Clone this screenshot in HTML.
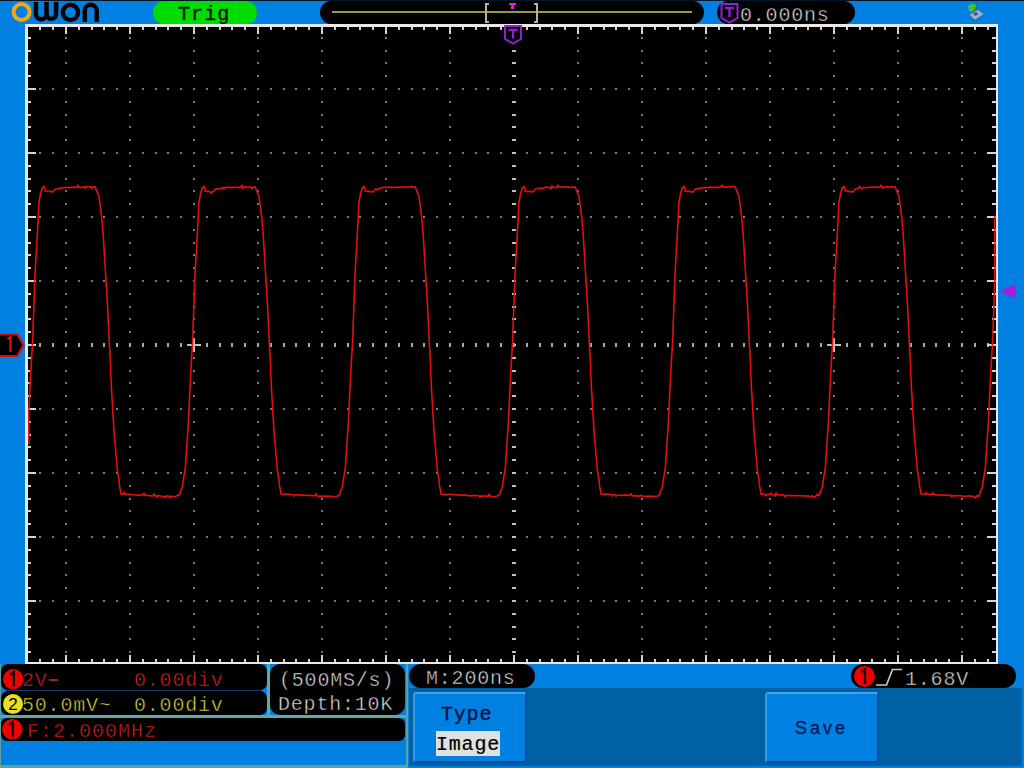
<!DOCTYPE html>
<html><head><meta charset="utf-8">
<style>
html,body{margin:0;padding:0;}
body{width:1024px;height:768px;overflow:hidden;position:relative;background:#0080e0;font-family:"Liberation Mono",monospace;}
.a{position:absolute;}
.t{position:absolute;white-space:pre;font-family:"Liberation Mono",monospace;font-size:20px;line-height:24px;letter-spacing:0.8px;-webkit-text-stroke:0.5px #000;}
.pill{position:absolute;background:#000;border-radius:12px;}
.circ{position:absolute;border-radius:50%;text-align:center;font-family:"Liberation Sans",sans-serif;font-weight:normal;color:#100000;}
</style></head><body>
<!-- top dark line -->
<div class="a" style="left:0;top:0;width:1024px;height:1px;background:#001428"></div>

<!-- OWON logo -->
<svg class="a" style="left:0;top:0" width="110" height="24" viewBox="0 0 110 24">
  <circle cx="21.6" cy="12" r="8" fill="none" stroke="#f0a818" stroke-width="4"/>
  <path d="M35.9,2 V14 a5.3,5.3 0 0 0 10.6,0 V2 M46.5,14 a4.8,4.8 0 0 0 9.6,0 V2" fill="none" stroke="#000" stroke-width="4.5"/>
  <circle cx="70.4" cy="12.4" r="7.6" fill="none" stroke="#000" stroke-width="4.5"/>
  <path d="M84.8,22 V10.8 a5.95,5.95 0 0 1 11.9,0 V22" fill="none" stroke="#000" stroke-width="4.5"/>
</svg>

<!-- Trig pill -->
<div class="a" style="left:153px;top:1px;width:104px;height:23px;border-radius:12px;background:#00dc00"></div>
<div class="t" style="left:178px;top:3px;color:#001800;letter-spacing:1.1px;-webkit-text-stroke:0.4px #001800">Trig</div>

<!-- memory bar pill -->
<div class="pill" style="left:320px;top:1px;width:384px;height:23px"></div>
<div class="a" style="left:332px;top:11px;width:360px;height:2px;background:#98983c"></div>
<!-- brackets -->
<div class="a" style="left:485px;top:3px;width:2px;height:20px;background:#b0b0b0"></div>
<div class="a" style="left:485px;top:3px;width:4px;height:2px;background:#b0b0b0"></div>
<div class="a" style="left:485px;top:21px;width:4px;height:2px;background:#b0b0b0"></div>
<div class="a" style="left:536px;top:3px;width:2px;height:20px;background:#b0b0b0"></div>
<div class="a" style="left:534px;top:3px;width:4px;height:2px;background:#b0b0b0"></div>
<div class="a" style="left:534px;top:21px;width:4px;height:2px;background:#b0b0b0"></div>
<!-- small magenta T -->
<div class="a" style="left:509px;top:3px;width:7px;height:2px;background:#e020e0"></div>
<div class="a" style="left:511px;top:3px;width:3px;height:6px;background:#e020e0"></div>

<!-- time offset pill -->
<div class="pill" style="left:717px;top:1px;width:138px;height:23px"></div>
<svg class="a" style="left:719px;top:2px" width="22" height="22" viewBox="0 0 22 22">
  <path d="M2.5,2 H18.5 V16 L10.5,20.5 L2.5,16 Z" fill="none" stroke="#9020d0" stroke-width="2"/>
  <path d="M6,6 H15 M10.5,6 V15" fill="none" stroke="#9020d0" stroke-width="2.4"/>
</svg>
<div class="t" style="left:740px;top:4px;color:#e0e0e0">0.000ns</div>

<!-- USB icon -->
<svg class="a" style="left:960px;top:0" width="30" height="24" viewBox="0 0 30 24">
  <path d="M9.5,15 L15,19.8 L23.5,14 L18,10 Z" fill="#a8b0b8"/>
  <path d="M13,14 L15.5,16 L18.5,14 L16,12 Z" fill="#504898"/>
  <path d="M8,6 L12,3.5 L16.5,5 L15.5,9.5 L12,12 L9,11 Z" fill="#48c030"/>
  <path d="M12,12 L15.5,9.5 L16.5,5" fill="none" stroke="#208020" stroke-width="1"/>
</svg>

<!-- grid -->
<div class="a" style="left:25px;top:24px;width:973px;height:640px;background:#e8e8e8"></div>
<div class="a" style="left:28px;top:27px;width:968px;height:635px;background:#000"></div>
<svg class="a" style="left:0;top:0" width="1024" height="768"><rect x="65" y="37" width="2" height="2" fill="#787878"/><rect x="65" y="50" width="2" height="2" fill="#787878"/><rect x="65" y="62" width="2" height="2" fill="#787878"/><rect x="65" y="75" width="2" height="2" fill="#787878"/><rect x="65" y="88" width="2" height="2" fill="#787878"/><rect x="65" y="101" width="2" height="2" fill="#787878"/><rect x="65" y="114" width="2" height="2" fill="#787878"/><rect x="65" y="126" width="2" height="2" fill="#787878"/><rect x="65" y="139" width="2" height="2" fill="#787878"/><rect x="65" y="152" width="2" height="2" fill="#787878"/><rect x="65" y="165" width="2" height="2" fill="#787878"/><rect x="65" y="178" width="2" height="2" fill="#787878"/><rect x="65" y="190" width="2" height="2" fill="#787878"/><rect x="65" y="203" width="2" height="2" fill="#787878"/><rect x="65" y="216" width="2" height="2" fill="#787878"/><rect x="65" y="229" width="2" height="2" fill="#787878"/><rect x="65" y="242" width="2" height="2" fill="#787878"/><rect x="65" y="254" width="2" height="2" fill="#787878"/><rect x="65" y="267" width="2" height="2" fill="#787878"/><rect x="65" y="280" width="2" height="2" fill="#787878"/><rect x="65" y="293" width="2" height="2" fill="#787878"/><rect x="65" y="306" width="2" height="2" fill="#787878"/><rect x="65" y="318" width="2" height="2" fill="#787878"/><rect x="65" y="331" width="2" height="2" fill="#787878"/><rect x="65" y="344" width="2" height="2" fill="#787878"/><rect x="65" y="357" width="2" height="2" fill="#787878"/><rect x="65" y="370" width="2" height="2" fill="#787878"/><rect x="65" y="382" width="2" height="2" fill="#787878"/><rect x="65" y="395" width="2" height="2" fill="#787878"/><rect x="65" y="408" width="2" height="2" fill="#787878"/><rect x="65" y="421" width="2" height="2" fill="#787878"/><rect x="65" y="434" width="2" height="2" fill="#787878"/><rect x="65" y="446" width="2" height="2" fill="#787878"/><rect x="65" y="459" width="2" height="2" fill="#787878"/><rect x="65" y="472" width="2" height="2" fill="#787878"/><rect x="65" y="485" width="2" height="2" fill="#787878"/><rect x="65" y="498" width="2" height="2" fill="#787878"/><rect x="65" y="510" width="2" height="2" fill="#787878"/><rect x="65" y="523" width="2" height="2" fill="#787878"/><rect x="65" y="536" width="2" height="2" fill="#787878"/><rect x="65" y="549" width="2" height="2" fill="#787878"/><rect x="65" y="562" width="2" height="2" fill="#787878"/><rect x="65" y="574" width="2" height="2" fill="#787878"/><rect x="65" y="587" width="2" height="2" fill="#787878"/><rect x="65" y="600" width="2" height="2" fill="#787878"/><rect x="65" y="613" width="2" height="2" fill="#787878"/><rect x="65" y="626" width="2" height="2" fill="#787878"/><rect x="65" y="638" width="2" height="2" fill="#787878"/><rect x="65" y="651" width="2" height="2" fill="#787878"/><rect x="129" y="37" width="2" height="2" fill="#787878"/><rect x="129" y="50" width="2" height="2" fill="#787878"/><rect x="129" y="62" width="2" height="2" fill="#787878"/><rect x="129" y="75" width="2" height="2" fill="#787878"/><rect x="129" y="88" width="2" height="2" fill="#787878"/><rect x="129" y="101" width="2" height="2" fill="#787878"/><rect x="129" y="114" width="2" height="2" fill="#787878"/><rect x="129" y="126" width="2" height="2" fill="#787878"/><rect x="129" y="139" width="2" height="2" fill="#787878"/><rect x="129" y="152" width="2" height="2" fill="#787878"/><rect x="129" y="165" width="2" height="2" fill="#787878"/><rect x="129" y="178" width="2" height="2" fill="#787878"/><rect x="129" y="190" width="2" height="2" fill="#787878"/><rect x="129" y="203" width="2" height="2" fill="#787878"/><rect x="129" y="216" width="2" height="2" fill="#787878"/><rect x="129" y="229" width="2" height="2" fill="#787878"/><rect x="129" y="242" width="2" height="2" fill="#787878"/><rect x="129" y="254" width="2" height="2" fill="#787878"/><rect x="129" y="267" width="2" height="2" fill="#787878"/><rect x="129" y="280" width="2" height="2" fill="#787878"/><rect x="129" y="293" width="2" height="2" fill="#787878"/><rect x="129" y="306" width="2" height="2" fill="#787878"/><rect x="129" y="318" width="2" height="2" fill="#787878"/><rect x="129" y="331" width="2" height="2" fill="#787878"/><rect x="129" y="344" width="2" height="2" fill="#787878"/><rect x="129" y="357" width="2" height="2" fill="#787878"/><rect x="129" y="370" width="2" height="2" fill="#787878"/><rect x="129" y="382" width="2" height="2" fill="#787878"/><rect x="129" y="395" width="2" height="2" fill="#787878"/><rect x="129" y="408" width="2" height="2" fill="#787878"/><rect x="129" y="421" width="2" height="2" fill="#787878"/><rect x="129" y="434" width="2" height="2" fill="#787878"/><rect x="129" y="446" width="2" height="2" fill="#787878"/><rect x="129" y="459" width="2" height="2" fill="#787878"/><rect x="129" y="472" width="2" height="2" fill="#787878"/><rect x="129" y="485" width="2" height="2" fill="#787878"/><rect x="129" y="498" width="2" height="2" fill="#787878"/><rect x="129" y="510" width="2" height="2" fill="#787878"/><rect x="129" y="523" width="2" height="2" fill="#787878"/><rect x="129" y="536" width="2" height="2" fill="#787878"/><rect x="129" y="549" width="2" height="2" fill="#787878"/><rect x="129" y="562" width="2" height="2" fill="#787878"/><rect x="129" y="574" width="2" height="2" fill="#787878"/><rect x="129" y="587" width="2" height="2" fill="#787878"/><rect x="129" y="600" width="2" height="2" fill="#787878"/><rect x="129" y="613" width="2" height="2" fill="#787878"/><rect x="129" y="626" width="2" height="2" fill="#787878"/><rect x="129" y="638" width="2" height="2" fill="#787878"/><rect x="129" y="651" width="2" height="2" fill="#787878"/><rect x="193" y="37" width="2" height="2" fill="#787878"/><rect x="193" y="50" width="2" height="2" fill="#787878"/><rect x="193" y="62" width="2" height="2" fill="#787878"/><rect x="193" y="75" width="2" height="2" fill="#787878"/><rect x="193" y="88" width="2" height="2" fill="#787878"/><rect x="193" y="101" width="2" height="2" fill="#787878"/><rect x="193" y="114" width="2" height="2" fill="#787878"/><rect x="193" y="126" width="2" height="2" fill="#787878"/><rect x="193" y="139" width="2" height="2" fill="#787878"/><rect x="193" y="152" width="2" height="2" fill="#787878"/><rect x="193" y="165" width="2" height="2" fill="#787878"/><rect x="193" y="178" width="2" height="2" fill="#787878"/><rect x="193" y="190" width="2" height="2" fill="#787878"/><rect x="193" y="203" width="2" height="2" fill="#787878"/><rect x="193" y="216" width="2" height="2" fill="#787878"/><rect x="193" y="229" width="2" height="2" fill="#787878"/><rect x="193" y="242" width="2" height="2" fill="#787878"/><rect x="193" y="254" width="2" height="2" fill="#787878"/><rect x="193" y="267" width="2" height="2" fill="#787878"/><rect x="193" y="280" width="2" height="2" fill="#787878"/><rect x="193" y="293" width="2" height="2" fill="#787878"/><rect x="193" y="306" width="2" height="2" fill="#787878"/><rect x="193" y="318" width="2" height="2" fill="#787878"/><rect x="193" y="331" width="2" height="2" fill="#787878"/><rect x="193" y="344" width="2" height="2" fill="#787878"/><rect x="193" y="357" width="2" height="2" fill="#787878"/><rect x="193" y="370" width="2" height="2" fill="#787878"/><rect x="193" y="382" width="2" height="2" fill="#787878"/><rect x="193" y="395" width="2" height="2" fill="#787878"/><rect x="193" y="408" width="2" height="2" fill="#787878"/><rect x="193" y="421" width="2" height="2" fill="#787878"/><rect x="193" y="434" width="2" height="2" fill="#787878"/><rect x="193" y="446" width="2" height="2" fill="#787878"/><rect x="193" y="459" width="2" height="2" fill="#787878"/><rect x="193" y="472" width="2" height="2" fill="#787878"/><rect x="193" y="485" width="2" height="2" fill="#787878"/><rect x="193" y="498" width="2" height="2" fill="#787878"/><rect x="193" y="510" width="2" height="2" fill="#787878"/><rect x="193" y="523" width="2" height="2" fill="#787878"/><rect x="193" y="536" width="2" height="2" fill="#787878"/><rect x="193" y="549" width="2" height="2" fill="#787878"/><rect x="193" y="562" width="2" height="2" fill="#787878"/><rect x="193" y="574" width="2" height="2" fill="#787878"/><rect x="193" y="587" width="2" height="2" fill="#787878"/><rect x="193" y="600" width="2" height="2" fill="#787878"/><rect x="193" y="613" width="2" height="2" fill="#787878"/><rect x="193" y="626" width="2" height="2" fill="#787878"/><rect x="193" y="638" width="2" height="2" fill="#787878"/><rect x="193" y="651" width="2" height="2" fill="#787878"/><rect x="257" y="37" width="2" height="2" fill="#787878"/><rect x="257" y="50" width="2" height="2" fill="#787878"/><rect x="257" y="62" width="2" height="2" fill="#787878"/><rect x="257" y="75" width="2" height="2" fill="#787878"/><rect x="257" y="88" width="2" height="2" fill="#787878"/><rect x="257" y="101" width="2" height="2" fill="#787878"/><rect x="257" y="114" width="2" height="2" fill="#787878"/><rect x="257" y="126" width="2" height="2" fill="#787878"/><rect x="257" y="139" width="2" height="2" fill="#787878"/><rect x="257" y="152" width="2" height="2" fill="#787878"/><rect x="257" y="165" width="2" height="2" fill="#787878"/><rect x="257" y="178" width="2" height="2" fill="#787878"/><rect x="257" y="190" width="2" height="2" fill="#787878"/><rect x="257" y="203" width="2" height="2" fill="#787878"/><rect x="257" y="216" width="2" height="2" fill="#787878"/><rect x="257" y="229" width="2" height="2" fill="#787878"/><rect x="257" y="242" width="2" height="2" fill="#787878"/><rect x="257" y="254" width="2" height="2" fill="#787878"/><rect x="257" y="267" width="2" height="2" fill="#787878"/><rect x="257" y="280" width="2" height="2" fill="#787878"/><rect x="257" y="293" width="2" height="2" fill="#787878"/><rect x="257" y="306" width="2" height="2" fill="#787878"/><rect x="257" y="318" width="2" height="2" fill="#787878"/><rect x="257" y="331" width="2" height="2" fill="#787878"/><rect x="257" y="344" width="2" height="2" fill="#787878"/><rect x="257" y="357" width="2" height="2" fill="#787878"/><rect x="257" y="370" width="2" height="2" fill="#787878"/><rect x="257" y="382" width="2" height="2" fill="#787878"/><rect x="257" y="395" width="2" height="2" fill="#787878"/><rect x="257" y="408" width="2" height="2" fill="#787878"/><rect x="257" y="421" width="2" height="2" fill="#787878"/><rect x="257" y="434" width="2" height="2" fill="#787878"/><rect x="257" y="446" width="2" height="2" fill="#787878"/><rect x="257" y="459" width="2" height="2" fill="#787878"/><rect x="257" y="472" width="2" height="2" fill="#787878"/><rect x="257" y="485" width="2" height="2" fill="#787878"/><rect x="257" y="498" width="2" height="2" fill="#787878"/><rect x="257" y="510" width="2" height="2" fill="#787878"/><rect x="257" y="523" width="2" height="2" fill="#787878"/><rect x="257" y="536" width="2" height="2" fill="#787878"/><rect x="257" y="549" width="2" height="2" fill="#787878"/><rect x="257" y="562" width="2" height="2" fill="#787878"/><rect x="257" y="574" width="2" height="2" fill="#787878"/><rect x="257" y="587" width="2" height="2" fill="#787878"/><rect x="257" y="600" width="2" height="2" fill="#787878"/><rect x="257" y="613" width="2" height="2" fill="#787878"/><rect x="257" y="626" width="2" height="2" fill="#787878"/><rect x="257" y="638" width="2" height="2" fill="#787878"/><rect x="257" y="651" width="2" height="2" fill="#787878"/><rect x="321" y="37" width="2" height="2" fill="#787878"/><rect x="321" y="50" width="2" height="2" fill="#787878"/><rect x="321" y="62" width="2" height="2" fill="#787878"/><rect x="321" y="75" width="2" height="2" fill="#787878"/><rect x="321" y="88" width="2" height="2" fill="#787878"/><rect x="321" y="101" width="2" height="2" fill="#787878"/><rect x="321" y="114" width="2" height="2" fill="#787878"/><rect x="321" y="126" width="2" height="2" fill="#787878"/><rect x="321" y="139" width="2" height="2" fill="#787878"/><rect x="321" y="152" width="2" height="2" fill="#787878"/><rect x="321" y="165" width="2" height="2" fill="#787878"/><rect x="321" y="178" width="2" height="2" fill="#787878"/><rect x="321" y="190" width="2" height="2" fill="#787878"/><rect x="321" y="203" width="2" height="2" fill="#787878"/><rect x="321" y="216" width="2" height="2" fill="#787878"/><rect x="321" y="229" width="2" height="2" fill="#787878"/><rect x="321" y="242" width="2" height="2" fill="#787878"/><rect x="321" y="254" width="2" height="2" fill="#787878"/><rect x="321" y="267" width="2" height="2" fill="#787878"/><rect x="321" y="280" width="2" height="2" fill="#787878"/><rect x="321" y="293" width="2" height="2" fill="#787878"/><rect x="321" y="306" width="2" height="2" fill="#787878"/><rect x="321" y="318" width="2" height="2" fill="#787878"/><rect x="321" y="331" width="2" height="2" fill="#787878"/><rect x="321" y="344" width="2" height="2" fill="#787878"/><rect x="321" y="357" width="2" height="2" fill="#787878"/><rect x="321" y="370" width="2" height="2" fill="#787878"/><rect x="321" y="382" width="2" height="2" fill="#787878"/><rect x="321" y="395" width="2" height="2" fill="#787878"/><rect x="321" y="408" width="2" height="2" fill="#787878"/><rect x="321" y="421" width="2" height="2" fill="#787878"/><rect x="321" y="434" width="2" height="2" fill="#787878"/><rect x="321" y="446" width="2" height="2" fill="#787878"/><rect x="321" y="459" width="2" height="2" fill="#787878"/><rect x="321" y="472" width="2" height="2" fill="#787878"/><rect x="321" y="485" width="2" height="2" fill="#787878"/><rect x="321" y="498" width="2" height="2" fill="#787878"/><rect x="321" y="510" width="2" height="2" fill="#787878"/><rect x="321" y="523" width="2" height="2" fill="#787878"/><rect x="321" y="536" width="2" height="2" fill="#787878"/><rect x="321" y="549" width="2" height="2" fill="#787878"/><rect x="321" y="562" width="2" height="2" fill="#787878"/><rect x="321" y="574" width="2" height="2" fill="#787878"/><rect x="321" y="587" width="2" height="2" fill="#787878"/><rect x="321" y="600" width="2" height="2" fill="#787878"/><rect x="321" y="613" width="2" height="2" fill="#787878"/><rect x="321" y="626" width="2" height="2" fill="#787878"/><rect x="321" y="638" width="2" height="2" fill="#787878"/><rect x="321" y="651" width="2" height="2" fill="#787878"/><rect x="385" y="37" width="2" height="2" fill="#787878"/><rect x="385" y="50" width="2" height="2" fill="#787878"/><rect x="385" y="62" width="2" height="2" fill="#787878"/><rect x="385" y="75" width="2" height="2" fill="#787878"/><rect x="385" y="88" width="2" height="2" fill="#787878"/><rect x="385" y="101" width="2" height="2" fill="#787878"/><rect x="385" y="114" width="2" height="2" fill="#787878"/><rect x="385" y="126" width="2" height="2" fill="#787878"/><rect x="385" y="139" width="2" height="2" fill="#787878"/><rect x="385" y="152" width="2" height="2" fill="#787878"/><rect x="385" y="165" width="2" height="2" fill="#787878"/><rect x="385" y="178" width="2" height="2" fill="#787878"/><rect x="385" y="190" width="2" height="2" fill="#787878"/><rect x="385" y="203" width="2" height="2" fill="#787878"/><rect x="385" y="216" width="2" height="2" fill="#787878"/><rect x="385" y="229" width="2" height="2" fill="#787878"/><rect x="385" y="242" width="2" height="2" fill="#787878"/><rect x="385" y="254" width="2" height="2" fill="#787878"/><rect x="385" y="267" width="2" height="2" fill="#787878"/><rect x="385" y="280" width="2" height="2" fill="#787878"/><rect x="385" y="293" width="2" height="2" fill="#787878"/><rect x="385" y="306" width="2" height="2" fill="#787878"/><rect x="385" y="318" width="2" height="2" fill="#787878"/><rect x="385" y="331" width="2" height="2" fill="#787878"/><rect x="385" y="344" width="2" height="2" fill="#787878"/><rect x="385" y="357" width="2" height="2" fill="#787878"/><rect x="385" y="370" width="2" height="2" fill="#787878"/><rect x="385" y="382" width="2" height="2" fill="#787878"/><rect x="385" y="395" width="2" height="2" fill="#787878"/><rect x="385" y="408" width="2" height="2" fill="#787878"/><rect x="385" y="421" width="2" height="2" fill="#787878"/><rect x="385" y="434" width="2" height="2" fill="#787878"/><rect x="385" y="446" width="2" height="2" fill="#787878"/><rect x="385" y="459" width="2" height="2" fill="#787878"/><rect x="385" y="472" width="2" height="2" fill="#787878"/><rect x="385" y="485" width="2" height="2" fill="#787878"/><rect x="385" y="498" width="2" height="2" fill="#787878"/><rect x="385" y="510" width="2" height="2" fill="#787878"/><rect x="385" y="523" width="2" height="2" fill="#787878"/><rect x="385" y="536" width="2" height="2" fill="#787878"/><rect x="385" y="549" width="2" height="2" fill="#787878"/><rect x="385" y="562" width="2" height="2" fill="#787878"/><rect x="385" y="574" width="2" height="2" fill="#787878"/><rect x="385" y="587" width="2" height="2" fill="#787878"/><rect x="385" y="600" width="2" height="2" fill="#787878"/><rect x="385" y="613" width="2" height="2" fill="#787878"/><rect x="385" y="626" width="2" height="2" fill="#787878"/><rect x="385" y="638" width="2" height="2" fill="#787878"/><rect x="385" y="651" width="2" height="2" fill="#787878"/><rect x="449" y="37" width="2" height="2" fill="#787878"/><rect x="449" y="50" width="2" height="2" fill="#787878"/><rect x="449" y="62" width="2" height="2" fill="#787878"/><rect x="449" y="75" width="2" height="2" fill="#787878"/><rect x="449" y="88" width="2" height="2" fill="#787878"/><rect x="449" y="101" width="2" height="2" fill="#787878"/><rect x="449" y="114" width="2" height="2" fill="#787878"/><rect x="449" y="126" width="2" height="2" fill="#787878"/><rect x="449" y="139" width="2" height="2" fill="#787878"/><rect x="449" y="152" width="2" height="2" fill="#787878"/><rect x="449" y="165" width="2" height="2" fill="#787878"/><rect x="449" y="178" width="2" height="2" fill="#787878"/><rect x="449" y="190" width="2" height="2" fill="#787878"/><rect x="449" y="203" width="2" height="2" fill="#787878"/><rect x="449" y="216" width="2" height="2" fill="#787878"/><rect x="449" y="229" width="2" height="2" fill="#787878"/><rect x="449" y="242" width="2" height="2" fill="#787878"/><rect x="449" y="254" width="2" height="2" fill="#787878"/><rect x="449" y="267" width="2" height="2" fill="#787878"/><rect x="449" y="280" width="2" height="2" fill="#787878"/><rect x="449" y="293" width="2" height="2" fill="#787878"/><rect x="449" y="306" width="2" height="2" fill="#787878"/><rect x="449" y="318" width="2" height="2" fill="#787878"/><rect x="449" y="331" width="2" height="2" fill="#787878"/><rect x="449" y="344" width="2" height="2" fill="#787878"/><rect x="449" y="357" width="2" height="2" fill="#787878"/><rect x="449" y="370" width="2" height="2" fill="#787878"/><rect x="449" y="382" width="2" height="2" fill="#787878"/><rect x="449" y="395" width="2" height="2" fill="#787878"/><rect x="449" y="408" width="2" height="2" fill="#787878"/><rect x="449" y="421" width="2" height="2" fill="#787878"/><rect x="449" y="434" width="2" height="2" fill="#787878"/><rect x="449" y="446" width="2" height="2" fill="#787878"/><rect x="449" y="459" width="2" height="2" fill="#787878"/><rect x="449" y="472" width="2" height="2" fill="#787878"/><rect x="449" y="485" width="2" height="2" fill="#787878"/><rect x="449" y="498" width="2" height="2" fill="#787878"/><rect x="449" y="510" width="2" height="2" fill="#787878"/><rect x="449" y="523" width="2" height="2" fill="#787878"/><rect x="449" y="536" width="2" height="2" fill="#787878"/><rect x="449" y="549" width="2" height="2" fill="#787878"/><rect x="449" y="562" width="2" height="2" fill="#787878"/><rect x="449" y="574" width="2" height="2" fill="#787878"/><rect x="449" y="587" width="2" height="2" fill="#787878"/><rect x="449" y="600" width="2" height="2" fill="#787878"/><rect x="449" y="613" width="2" height="2" fill="#787878"/><rect x="449" y="626" width="2" height="2" fill="#787878"/><rect x="449" y="638" width="2" height="2" fill="#787878"/><rect x="449" y="651" width="2" height="2" fill="#787878"/><rect x="513" y="37" width="2" height="2" fill="#787878"/><rect x="513" y="50" width="2" height="2" fill="#787878"/><rect x="513" y="62" width="2" height="2" fill="#787878"/><rect x="513" y="75" width="2" height="2" fill="#787878"/><rect x="513" y="88" width="2" height="2" fill="#787878"/><rect x="513" y="101" width="2" height="2" fill="#787878"/><rect x="513" y="114" width="2" height="2" fill="#787878"/><rect x="513" y="126" width="2" height="2" fill="#787878"/><rect x="513" y="139" width="2" height="2" fill="#787878"/><rect x="513" y="152" width="2" height="2" fill="#787878"/><rect x="513" y="165" width="2" height="2" fill="#787878"/><rect x="513" y="178" width="2" height="2" fill="#787878"/><rect x="513" y="190" width="2" height="2" fill="#787878"/><rect x="513" y="203" width="2" height="2" fill="#787878"/><rect x="513" y="216" width="2" height="2" fill="#787878"/><rect x="513" y="229" width="2" height="2" fill="#787878"/><rect x="513" y="242" width="2" height="2" fill="#787878"/><rect x="513" y="254" width="2" height="2" fill="#787878"/><rect x="513" y="267" width="2" height="2" fill="#787878"/><rect x="513" y="280" width="2" height="2" fill="#787878"/><rect x="513" y="293" width="2" height="2" fill="#787878"/><rect x="513" y="306" width="2" height="2" fill="#787878"/><rect x="513" y="318" width="2" height="2" fill="#787878"/><rect x="513" y="331" width="2" height="2" fill="#787878"/><rect x="513" y="344" width="2" height="2" fill="#787878"/><rect x="513" y="357" width="2" height="2" fill="#787878"/><rect x="513" y="370" width="2" height="2" fill="#787878"/><rect x="513" y="382" width="2" height="2" fill="#787878"/><rect x="513" y="395" width="2" height="2" fill="#787878"/><rect x="513" y="408" width="2" height="2" fill="#787878"/><rect x="513" y="421" width="2" height="2" fill="#787878"/><rect x="513" y="434" width="2" height="2" fill="#787878"/><rect x="513" y="446" width="2" height="2" fill="#787878"/><rect x="513" y="459" width="2" height="2" fill="#787878"/><rect x="513" y="472" width="2" height="2" fill="#787878"/><rect x="513" y="485" width="2" height="2" fill="#787878"/><rect x="513" y="498" width="2" height="2" fill="#787878"/><rect x="513" y="510" width="2" height="2" fill="#787878"/><rect x="513" y="523" width="2" height="2" fill="#787878"/><rect x="513" y="536" width="2" height="2" fill="#787878"/><rect x="513" y="549" width="2" height="2" fill="#787878"/><rect x="513" y="562" width="2" height="2" fill="#787878"/><rect x="513" y="574" width="2" height="2" fill="#787878"/><rect x="513" y="587" width="2" height="2" fill="#787878"/><rect x="513" y="600" width="2" height="2" fill="#787878"/><rect x="513" y="613" width="2" height="2" fill="#787878"/><rect x="513" y="626" width="2" height="2" fill="#787878"/><rect x="513" y="638" width="2" height="2" fill="#787878"/><rect x="513" y="651" width="2" height="2" fill="#787878"/><rect x="577" y="37" width="2" height="2" fill="#787878"/><rect x="577" y="50" width="2" height="2" fill="#787878"/><rect x="577" y="62" width="2" height="2" fill="#787878"/><rect x="577" y="75" width="2" height="2" fill="#787878"/><rect x="577" y="88" width="2" height="2" fill="#787878"/><rect x="577" y="101" width="2" height="2" fill="#787878"/><rect x="577" y="114" width="2" height="2" fill="#787878"/><rect x="577" y="126" width="2" height="2" fill="#787878"/><rect x="577" y="139" width="2" height="2" fill="#787878"/><rect x="577" y="152" width="2" height="2" fill="#787878"/><rect x="577" y="165" width="2" height="2" fill="#787878"/><rect x="577" y="178" width="2" height="2" fill="#787878"/><rect x="577" y="190" width="2" height="2" fill="#787878"/><rect x="577" y="203" width="2" height="2" fill="#787878"/><rect x="577" y="216" width="2" height="2" fill="#787878"/><rect x="577" y="229" width="2" height="2" fill="#787878"/><rect x="577" y="242" width="2" height="2" fill="#787878"/><rect x="577" y="254" width="2" height="2" fill="#787878"/><rect x="577" y="267" width="2" height="2" fill="#787878"/><rect x="577" y="280" width="2" height="2" fill="#787878"/><rect x="577" y="293" width="2" height="2" fill="#787878"/><rect x="577" y="306" width="2" height="2" fill="#787878"/><rect x="577" y="318" width="2" height="2" fill="#787878"/><rect x="577" y="331" width="2" height="2" fill="#787878"/><rect x="577" y="344" width="2" height="2" fill="#787878"/><rect x="577" y="357" width="2" height="2" fill="#787878"/><rect x="577" y="370" width="2" height="2" fill="#787878"/><rect x="577" y="382" width="2" height="2" fill="#787878"/><rect x="577" y="395" width="2" height="2" fill="#787878"/><rect x="577" y="408" width="2" height="2" fill="#787878"/><rect x="577" y="421" width="2" height="2" fill="#787878"/><rect x="577" y="434" width="2" height="2" fill="#787878"/><rect x="577" y="446" width="2" height="2" fill="#787878"/><rect x="577" y="459" width="2" height="2" fill="#787878"/><rect x="577" y="472" width="2" height="2" fill="#787878"/><rect x="577" y="485" width="2" height="2" fill="#787878"/><rect x="577" y="498" width="2" height="2" fill="#787878"/><rect x="577" y="510" width="2" height="2" fill="#787878"/><rect x="577" y="523" width="2" height="2" fill="#787878"/><rect x="577" y="536" width="2" height="2" fill="#787878"/><rect x="577" y="549" width="2" height="2" fill="#787878"/><rect x="577" y="562" width="2" height="2" fill="#787878"/><rect x="577" y="574" width="2" height="2" fill="#787878"/><rect x="577" y="587" width="2" height="2" fill="#787878"/><rect x="577" y="600" width="2" height="2" fill="#787878"/><rect x="577" y="613" width="2" height="2" fill="#787878"/><rect x="577" y="626" width="2" height="2" fill="#787878"/><rect x="577" y="638" width="2" height="2" fill="#787878"/><rect x="577" y="651" width="2" height="2" fill="#787878"/><rect x="641" y="37" width="2" height="2" fill="#787878"/><rect x="641" y="50" width="2" height="2" fill="#787878"/><rect x="641" y="62" width="2" height="2" fill="#787878"/><rect x="641" y="75" width="2" height="2" fill="#787878"/><rect x="641" y="88" width="2" height="2" fill="#787878"/><rect x="641" y="101" width="2" height="2" fill="#787878"/><rect x="641" y="114" width="2" height="2" fill="#787878"/><rect x="641" y="126" width="2" height="2" fill="#787878"/><rect x="641" y="139" width="2" height="2" fill="#787878"/><rect x="641" y="152" width="2" height="2" fill="#787878"/><rect x="641" y="165" width="2" height="2" fill="#787878"/><rect x="641" y="178" width="2" height="2" fill="#787878"/><rect x="641" y="190" width="2" height="2" fill="#787878"/><rect x="641" y="203" width="2" height="2" fill="#787878"/><rect x="641" y="216" width="2" height="2" fill="#787878"/><rect x="641" y="229" width="2" height="2" fill="#787878"/><rect x="641" y="242" width="2" height="2" fill="#787878"/><rect x="641" y="254" width="2" height="2" fill="#787878"/><rect x="641" y="267" width="2" height="2" fill="#787878"/><rect x="641" y="280" width="2" height="2" fill="#787878"/><rect x="641" y="293" width="2" height="2" fill="#787878"/><rect x="641" y="306" width="2" height="2" fill="#787878"/><rect x="641" y="318" width="2" height="2" fill="#787878"/><rect x="641" y="331" width="2" height="2" fill="#787878"/><rect x="641" y="344" width="2" height="2" fill="#787878"/><rect x="641" y="357" width="2" height="2" fill="#787878"/><rect x="641" y="370" width="2" height="2" fill="#787878"/><rect x="641" y="382" width="2" height="2" fill="#787878"/><rect x="641" y="395" width="2" height="2" fill="#787878"/><rect x="641" y="408" width="2" height="2" fill="#787878"/><rect x="641" y="421" width="2" height="2" fill="#787878"/><rect x="641" y="434" width="2" height="2" fill="#787878"/><rect x="641" y="446" width="2" height="2" fill="#787878"/><rect x="641" y="459" width="2" height="2" fill="#787878"/><rect x="641" y="472" width="2" height="2" fill="#787878"/><rect x="641" y="485" width="2" height="2" fill="#787878"/><rect x="641" y="498" width="2" height="2" fill="#787878"/><rect x="641" y="510" width="2" height="2" fill="#787878"/><rect x="641" y="523" width="2" height="2" fill="#787878"/><rect x="641" y="536" width="2" height="2" fill="#787878"/><rect x="641" y="549" width="2" height="2" fill="#787878"/><rect x="641" y="562" width="2" height="2" fill="#787878"/><rect x="641" y="574" width="2" height="2" fill="#787878"/><rect x="641" y="587" width="2" height="2" fill="#787878"/><rect x="641" y="600" width="2" height="2" fill="#787878"/><rect x="641" y="613" width="2" height="2" fill="#787878"/><rect x="641" y="626" width="2" height="2" fill="#787878"/><rect x="641" y="638" width="2" height="2" fill="#787878"/><rect x="641" y="651" width="2" height="2" fill="#787878"/><rect x="705" y="37" width="2" height="2" fill="#787878"/><rect x="705" y="50" width="2" height="2" fill="#787878"/><rect x="705" y="62" width="2" height="2" fill="#787878"/><rect x="705" y="75" width="2" height="2" fill="#787878"/><rect x="705" y="88" width="2" height="2" fill="#787878"/><rect x="705" y="101" width="2" height="2" fill="#787878"/><rect x="705" y="114" width="2" height="2" fill="#787878"/><rect x="705" y="126" width="2" height="2" fill="#787878"/><rect x="705" y="139" width="2" height="2" fill="#787878"/><rect x="705" y="152" width="2" height="2" fill="#787878"/><rect x="705" y="165" width="2" height="2" fill="#787878"/><rect x="705" y="178" width="2" height="2" fill="#787878"/><rect x="705" y="190" width="2" height="2" fill="#787878"/><rect x="705" y="203" width="2" height="2" fill="#787878"/><rect x="705" y="216" width="2" height="2" fill="#787878"/><rect x="705" y="229" width="2" height="2" fill="#787878"/><rect x="705" y="242" width="2" height="2" fill="#787878"/><rect x="705" y="254" width="2" height="2" fill="#787878"/><rect x="705" y="267" width="2" height="2" fill="#787878"/><rect x="705" y="280" width="2" height="2" fill="#787878"/><rect x="705" y="293" width="2" height="2" fill="#787878"/><rect x="705" y="306" width="2" height="2" fill="#787878"/><rect x="705" y="318" width="2" height="2" fill="#787878"/><rect x="705" y="331" width="2" height="2" fill="#787878"/><rect x="705" y="344" width="2" height="2" fill="#787878"/><rect x="705" y="357" width="2" height="2" fill="#787878"/><rect x="705" y="370" width="2" height="2" fill="#787878"/><rect x="705" y="382" width="2" height="2" fill="#787878"/><rect x="705" y="395" width="2" height="2" fill="#787878"/><rect x="705" y="408" width="2" height="2" fill="#787878"/><rect x="705" y="421" width="2" height="2" fill="#787878"/><rect x="705" y="434" width="2" height="2" fill="#787878"/><rect x="705" y="446" width="2" height="2" fill="#787878"/><rect x="705" y="459" width="2" height="2" fill="#787878"/><rect x="705" y="472" width="2" height="2" fill="#787878"/><rect x="705" y="485" width="2" height="2" fill="#787878"/><rect x="705" y="498" width="2" height="2" fill="#787878"/><rect x="705" y="510" width="2" height="2" fill="#787878"/><rect x="705" y="523" width="2" height="2" fill="#787878"/><rect x="705" y="536" width="2" height="2" fill="#787878"/><rect x="705" y="549" width="2" height="2" fill="#787878"/><rect x="705" y="562" width="2" height="2" fill="#787878"/><rect x="705" y="574" width="2" height="2" fill="#787878"/><rect x="705" y="587" width="2" height="2" fill="#787878"/><rect x="705" y="600" width="2" height="2" fill="#787878"/><rect x="705" y="613" width="2" height="2" fill="#787878"/><rect x="705" y="626" width="2" height="2" fill="#787878"/><rect x="705" y="638" width="2" height="2" fill="#787878"/><rect x="705" y="651" width="2" height="2" fill="#787878"/><rect x="769" y="37" width="2" height="2" fill="#787878"/><rect x="769" y="50" width="2" height="2" fill="#787878"/><rect x="769" y="62" width="2" height="2" fill="#787878"/><rect x="769" y="75" width="2" height="2" fill="#787878"/><rect x="769" y="88" width="2" height="2" fill="#787878"/><rect x="769" y="101" width="2" height="2" fill="#787878"/><rect x="769" y="114" width="2" height="2" fill="#787878"/><rect x="769" y="126" width="2" height="2" fill="#787878"/><rect x="769" y="139" width="2" height="2" fill="#787878"/><rect x="769" y="152" width="2" height="2" fill="#787878"/><rect x="769" y="165" width="2" height="2" fill="#787878"/><rect x="769" y="178" width="2" height="2" fill="#787878"/><rect x="769" y="190" width="2" height="2" fill="#787878"/><rect x="769" y="203" width="2" height="2" fill="#787878"/><rect x="769" y="216" width="2" height="2" fill="#787878"/><rect x="769" y="229" width="2" height="2" fill="#787878"/><rect x="769" y="242" width="2" height="2" fill="#787878"/><rect x="769" y="254" width="2" height="2" fill="#787878"/><rect x="769" y="267" width="2" height="2" fill="#787878"/><rect x="769" y="280" width="2" height="2" fill="#787878"/><rect x="769" y="293" width="2" height="2" fill="#787878"/><rect x="769" y="306" width="2" height="2" fill="#787878"/><rect x="769" y="318" width="2" height="2" fill="#787878"/><rect x="769" y="331" width="2" height="2" fill="#787878"/><rect x="769" y="344" width="2" height="2" fill="#787878"/><rect x="769" y="357" width="2" height="2" fill="#787878"/><rect x="769" y="370" width="2" height="2" fill="#787878"/><rect x="769" y="382" width="2" height="2" fill="#787878"/><rect x="769" y="395" width="2" height="2" fill="#787878"/><rect x="769" y="408" width="2" height="2" fill="#787878"/><rect x="769" y="421" width="2" height="2" fill="#787878"/><rect x="769" y="434" width="2" height="2" fill="#787878"/><rect x="769" y="446" width="2" height="2" fill="#787878"/><rect x="769" y="459" width="2" height="2" fill="#787878"/><rect x="769" y="472" width="2" height="2" fill="#787878"/><rect x="769" y="485" width="2" height="2" fill="#787878"/><rect x="769" y="498" width="2" height="2" fill="#787878"/><rect x="769" y="510" width="2" height="2" fill="#787878"/><rect x="769" y="523" width="2" height="2" fill="#787878"/><rect x="769" y="536" width="2" height="2" fill="#787878"/><rect x="769" y="549" width="2" height="2" fill="#787878"/><rect x="769" y="562" width="2" height="2" fill="#787878"/><rect x="769" y="574" width="2" height="2" fill="#787878"/><rect x="769" y="587" width="2" height="2" fill="#787878"/><rect x="769" y="600" width="2" height="2" fill="#787878"/><rect x="769" y="613" width="2" height="2" fill="#787878"/><rect x="769" y="626" width="2" height="2" fill="#787878"/><rect x="769" y="638" width="2" height="2" fill="#787878"/><rect x="769" y="651" width="2" height="2" fill="#787878"/><rect x="833" y="37" width="2" height="2" fill="#787878"/><rect x="833" y="50" width="2" height="2" fill="#787878"/><rect x="833" y="62" width="2" height="2" fill="#787878"/><rect x="833" y="75" width="2" height="2" fill="#787878"/><rect x="833" y="88" width="2" height="2" fill="#787878"/><rect x="833" y="101" width="2" height="2" fill="#787878"/><rect x="833" y="114" width="2" height="2" fill="#787878"/><rect x="833" y="126" width="2" height="2" fill="#787878"/><rect x="833" y="139" width="2" height="2" fill="#787878"/><rect x="833" y="152" width="2" height="2" fill="#787878"/><rect x="833" y="165" width="2" height="2" fill="#787878"/><rect x="833" y="178" width="2" height="2" fill="#787878"/><rect x="833" y="190" width="2" height="2" fill="#787878"/><rect x="833" y="203" width="2" height="2" fill="#787878"/><rect x="833" y="216" width="2" height="2" fill="#787878"/><rect x="833" y="229" width="2" height="2" fill="#787878"/><rect x="833" y="242" width="2" height="2" fill="#787878"/><rect x="833" y="254" width="2" height="2" fill="#787878"/><rect x="833" y="267" width="2" height="2" fill="#787878"/><rect x="833" y="280" width="2" height="2" fill="#787878"/><rect x="833" y="293" width="2" height="2" fill="#787878"/><rect x="833" y="306" width="2" height="2" fill="#787878"/><rect x="833" y="318" width="2" height="2" fill="#787878"/><rect x="833" y="331" width="2" height="2" fill="#787878"/><rect x="833" y="344" width="2" height="2" fill="#787878"/><rect x="833" y="357" width="2" height="2" fill="#787878"/><rect x="833" y="370" width="2" height="2" fill="#787878"/><rect x="833" y="382" width="2" height="2" fill="#787878"/><rect x="833" y="395" width="2" height="2" fill="#787878"/><rect x="833" y="408" width="2" height="2" fill="#787878"/><rect x="833" y="421" width="2" height="2" fill="#787878"/><rect x="833" y="434" width="2" height="2" fill="#787878"/><rect x="833" y="446" width="2" height="2" fill="#787878"/><rect x="833" y="459" width="2" height="2" fill="#787878"/><rect x="833" y="472" width="2" height="2" fill="#787878"/><rect x="833" y="485" width="2" height="2" fill="#787878"/><rect x="833" y="498" width="2" height="2" fill="#787878"/><rect x="833" y="510" width="2" height="2" fill="#787878"/><rect x="833" y="523" width="2" height="2" fill="#787878"/><rect x="833" y="536" width="2" height="2" fill="#787878"/><rect x="833" y="549" width="2" height="2" fill="#787878"/><rect x="833" y="562" width="2" height="2" fill="#787878"/><rect x="833" y="574" width="2" height="2" fill="#787878"/><rect x="833" y="587" width="2" height="2" fill="#787878"/><rect x="833" y="600" width="2" height="2" fill="#787878"/><rect x="833" y="613" width="2" height="2" fill="#787878"/><rect x="833" y="626" width="2" height="2" fill="#787878"/><rect x="833" y="638" width="2" height="2" fill="#787878"/><rect x="833" y="651" width="2" height="2" fill="#787878"/><rect x="897" y="37" width="2" height="2" fill="#787878"/><rect x="897" y="50" width="2" height="2" fill="#787878"/><rect x="897" y="62" width="2" height="2" fill="#787878"/><rect x="897" y="75" width="2" height="2" fill="#787878"/><rect x="897" y="88" width="2" height="2" fill="#787878"/><rect x="897" y="101" width="2" height="2" fill="#787878"/><rect x="897" y="114" width="2" height="2" fill="#787878"/><rect x="897" y="126" width="2" height="2" fill="#787878"/><rect x="897" y="139" width="2" height="2" fill="#787878"/><rect x="897" y="152" width="2" height="2" fill="#787878"/><rect x="897" y="165" width="2" height="2" fill="#787878"/><rect x="897" y="178" width="2" height="2" fill="#787878"/><rect x="897" y="190" width="2" height="2" fill="#787878"/><rect x="897" y="203" width="2" height="2" fill="#787878"/><rect x="897" y="216" width="2" height="2" fill="#787878"/><rect x="897" y="229" width="2" height="2" fill="#787878"/><rect x="897" y="242" width="2" height="2" fill="#787878"/><rect x="897" y="254" width="2" height="2" fill="#787878"/><rect x="897" y="267" width="2" height="2" fill="#787878"/><rect x="897" y="280" width="2" height="2" fill="#787878"/><rect x="897" y="293" width="2" height="2" fill="#787878"/><rect x="897" y="306" width="2" height="2" fill="#787878"/><rect x="897" y="318" width="2" height="2" fill="#787878"/><rect x="897" y="331" width="2" height="2" fill="#787878"/><rect x="897" y="344" width="2" height="2" fill="#787878"/><rect x="897" y="357" width="2" height="2" fill="#787878"/><rect x="897" y="370" width="2" height="2" fill="#787878"/><rect x="897" y="382" width="2" height="2" fill="#787878"/><rect x="897" y="395" width="2" height="2" fill="#787878"/><rect x="897" y="408" width="2" height="2" fill="#787878"/><rect x="897" y="421" width="2" height="2" fill="#787878"/><rect x="897" y="434" width="2" height="2" fill="#787878"/><rect x="897" y="446" width="2" height="2" fill="#787878"/><rect x="897" y="459" width="2" height="2" fill="#787878"/><rect x="897" y="472" width="2" height="2" fill="#787878"/><rect x="897" y="485" width="2" height="2" fill="#787878"/><rect x="897" y="498" width="2" height="2" fill="#787878"/><rect x="897" y="510" width="2" height="2" fill="#787878"/><rect x="897" y="523" width="2" height="2" fill="#787878"/><rect x="897" y="536" width="2" height="2" fill="#787878"/><rect x="897" y="549" width="2" height="2" fill="#787878"/><rect x="897" y="562" width="2" height="2" fill="#787878"/><rect x="897" y="574" width="2" height="2" fill="#787878"/><rect x="897" y="587" width="2" height="2" fill="#787878"/><rect x="897" y="600" width="2" height="2" fill="#787878"/><rect x="897" y="613" width="2" height="2" fill="#787878"/><rect x="897" y="626" width="2" height="2" fill="#787878"/><rect x="897" y="638" width="2" height="2" fill="#787878"/><rect x="897" y="651" width="2" height="2" fill="#787878"/><rect x="961" y="37" width="2" height="2" fill="#787878"/><rect x="961" y="50" width="2" height="2" fill="#787878"/><rect x="961" y="62" width="2" height="2" fill="#787878"/><rect x="961" y="75" width="2" height="2" fill="#787878"/><rect x="961" y="88" width="2" height="2" fill="#787878"/><rect x="961" y="101" width="2" height="2" fill="#787878"/><rect x="961" y="114" width="2" height="2" fill="#787878"/><rect x="961" y="126" width="2" height="2" fill="#787878"/><rect x="961" y="139" width="2" height="2" fill="#787878"/><rect x="961" y="152" width="2" height="2" fill="#787878"/><rect x="961" y="165" width="2" height="2" fill="#787878"/><rect x="961" y="178" width="2" height="2" fill="#787878"/><rect x="961" y="190" width="2" height="2" fill="#787878"/><rect x="961" y="203" width="2" height="2" fill="#787878"/><rect x="961" y="216" width="2" height="2" fill="#787878"/><rect x="961" y="229" width="2" height="2" fill="#787878"/><rect x="961" y="242" width="2" height="2" fill="#787878"/><rect x="961" y="254" width="2" height="2" fill="#787878"/><rect x="961" y="267" width="2" height="2" fill="#787878"/><rect x="961" y="280" width="2" height="2" fill="#787878"/><rect x="961" y="293" width="2" height="2" fill="#787878"/><rect x="961" y="306" width="2" height="2" fill="#787878"/><rect x="961" y="318" width="2" height="2" fill="#787878"/><rect x="961" y="331" width="2" height="2" fill="#787878"/><rect x="961" y="344" width="2" height="2" fill="#787878"/><rect x="961" y="357" width="2" height="2" fill="#787878"/><rect x="961" y="370" width="2" height="2" fill="#787878"/><rect x="961" y="382" width="2" height="2" fill="#787878"/><rect x="961" y="395" width="2" height="2" fill="#787878"/><rect x="961" y="408" width="2" height="2" fill="#787878"/><rect x="961" y="421" width="2" height="2" fill="#787878"/><rect x="961" y="434" width="2" height="2" fill="#787878"/><rect x="961" y="446" width="2" height="2" fill="#787878"/><rect x="961" y="459" width="2" height="2" fill="#787878"/><rect x="961" y="472" width="2" height="2" fill="#787878"/><rect x="961" y="485" width="2" height="2" fill="#787878"/><rect x="961" y="498" width="2" height="2" fill="#787878"/><rect x="961" y="510" width="2" height="2" fill="#787878"/><rect x="961" y="523" width="2" height="2" fill="#787878"/><rect x="961" y="536" width="2" height="2" fill="#787878"/><rect x="961" y="549" width="2" height="2" fill="#787878"/><rect x="961" y="562" width="2" height="2" fill="#787878"/><rect x="961" y="574" width="2" height="2" fill="#787878"/><rect x="961" y="587" width="2" height="2" fill="#787878"/><rect x="961" y="600" width="2" height="2" fill="#787878"/><rect x="961" y="613" width="2" height="2" fill="#787878"/><rect x="961" y="626" width="2" height="2" fill="#787878"/><rect x="961" y="638" width="2" height="2" fill="#787878"/><rect x="961" y="651" width="2" height="2" fill="#787878"/><rect x="39" y="88" width="2" height="2" fill="#787878"/><rect x="52" y="88" width="2" height="2" fill="#787878"/><rect x="78" y="88" width="2" height="2" fill="#787878"/><rect x="91" y="88" width="2" height="2" fill="#787878"/><rect x="103" y="88" width="2" height="2" fill="#787878"/><rect x="116" y="88" width="2" height="2" fill="#787878"/><rect x="142" y="88" width="2" height="2" fill="#787878"/><rect x="155" y="88" width="2" height="2" fill="#787878"/><rect x="167" y="88" width="2" height="2" fill="#787878"/><rect x="180" y="88" width="2" height="2" fill="#787878"/><rect x="206" y="88" width="2" height="2" fill="#787878"/><rect x="219" y="88" width="2" height="2" fill="#787878"/><rect x="231" y="88" width="2" height="2" fill="#787878"/><rect x="244" y="88" width="2" height="2" fill="#787878"/><rect x="270" y="88" width="2" height="2" fill="#787878"/><rect x="283" y="88" width="2" height="2" fill="#787878"/><rect x="295" y="88" width="2" height="2" fill="#787878"/><rect x="308" y="88" width="2" height="2" fill="#787878"/><rect x="334" y="88" width="2" height="2" fill="#787878"/><rect x="347" y="88" width="2" height="2" fill="#787878"/><rect x="359" y="88" width="2" height="2" fill="#787878"/><rect x="372" y="88" width="2" height="2" fill="#787878"/><rect x="398" y="88" width="2" height="2" fill="#787878"/><rect x="411" y="88" width="2" height="2" fill="#787878"/><rect x="423" y="88" width="2" height="2" fill="#787878"/><rect x="436" y="88" width="2" height="2" fill="#787878"/><rect x="462" y="88" width="2" height="2" fill="#787878"/><rect x="475" y="88" width="2" height="2" fill="#787878"/><rect x="487" y="88" width="2" height="2" fill="#787878"/><rect x="500" y="88" width="2" height="2" fill="#787878"/><rect x="526" y="88" width="2" height="2" fill="#787878"/><rect x="539" y="88" width="2" height="2" fill="#787878"/><rect x="551" y="88" width="2" height="2" fill="#787878"/><rect x="564" y="88" width="2" height="2" fill="#787878"/><rect x="590" y="88" width="2" height="2" fill="#787878"/><rect x="603" y="88" width="2" height="2" fill="#787878"/><rect x="615" y="88" width="2" height="2" fill="#787878"/><rect x="628" y="88" width="2" height="2" fill="#787878"/><rect x="654" y="88" width="2" height="2" fill="#787878"/><rect x="667" y="88" width="2" height="2" fill="#787878"/><rect x="679" y="88" width="2" height="2" fill="#787878"/><rect x="692" y="88" width="2" height="2" fill="#787878"/><rect x="718" y="88" width="2" height="2" fill="#787878"/><rect x="731" y="88" width="2" height="2" fill="#787878"/><rect x="743" y="88" width="2" height="2" fill="#787878"/><rect x="756" y="88" width="2" height="2" fill="#787878"/><rect x="782" y="88" width="2" height="2" fill="#787878"/><rect x="795" y="88" width="2" height="2" fill="#787878"/><rect x="807" y="88" width="2" height="2" fill="#787878"/><rect x="820" y="88" width="2" height="2" fill="#787878"/><rect x="846" y="88" width="2" height="2" fill="#787878"/><rect x="859" y="88" width="2" height="2" fill="#787878"/><rect x="871" y="88" width="2" height="2" fill="#787878"/><rect x="884" y="88" width="2" height="2" fill="#787878"/><rect x="910" y="88" width="2" height="2" fill="#787878"/><rect x="923" y="88" width="2" height="2" fill="#787878"/><rect x="935" y="88" width="2" height="2" fill="#787878"/><rect x="948" y="88" width="2" height="2" fill="#787878"/><rect x="974" y="88" width="2" height="2" fill="#787878"/><rect x="987" y="88" width="2" height="2" fill="#787878"/><rect x="39" y="152" width="2" height="2" fill="#787878"/><rect x="52" y="152" width="2" height="2" fill="#787878"/><rect x="78" y="152" width="2" height="2" fill="#787878"/><rect x="91" y="152" width="2" height="2" fill="#787878"/><rect x="103" y="152" width="2" height="2" fill="#787878"/><rect x="116" y="152" width="2" height="2" fill="#787878"/><rect x="142" y="152" width="2" height="2" fill="#787878"/><rect x="155" y="152" width="2" height="2" fill="#787878"/><rect x="167" y="152" width="2" height="2" fill="#787878"/><rect x="180" y="152" width="2" height="2" fill="#787878"/><rect x="206" y="152" width="2" height="2" fill="#787878"/><rect x="219" y="152" width="2" height="2" fill="#787878"/><rect x="231" y="152" width="2" height="2" fill="#787878"/><rect x="244" y="152" width="2" height="2" fill="#787878"/><rect x="270" y="152" width="2" height="2" fill="#787878"/><rect x="283" y="152" width="2" height="2" fill="#787878"/><rect x="295" y="152" width="2" height="2" fill="#787878"/><rect x="308" y="152" width="2" height="2" fill="#787878"/><rect x="334" y="152" width="2" height="2" fill="#787878"/><rect x="347" y="152" width="2" height="2" fill="#787878"/><rect x="359" y="152" width="2" height="2" fill="#787878"/><rect x="372" y="152" width="2" height="2" fill="#787878"/><rect x="398" y="152" width="2" height="2" fill="#787878"/><rect x="411" y="152" width="2" height="2" fill="#787878"/><rect x="423" y="152" width="2" height="2" fill="#787878"/><rect x="436" y="152" width="2" height="2" fill="#787878"/><rect x="462" y="152" width="2" height="2" fill="#787878"/><rect x="475" y="152" width="2" height="2" fill="#787878"/><rect x="487" y="152" width="2" height="2" fill="#787878"/><rect x="500" y="152" width="2" height="2" fill="#787878"/><rect x="526" y="152" width="2" height="2" fill="#787878"/><rect x="539" y="152" width="2" height="2" fill="#787878"/><rect x="551" y="152" width="2" height="2" fill="#787878"/><rect x="564" y="152" width="2" height="2" fill="#787878"/><rect x="590" y="152" width="2" height="2" fill="#787878"/><rect x="603" y="152" width="2" height="2" fill="#787878"/><rect x="615" y="152" width="2" height="2" fill="#787878"/><rect x="628" y="152" width="2" height="2" fill="#787878"/><rect x="654" y="152" width="2" height="2" fill="#787878"/><rect x="667" y="152" width="2" height="2" fill="#787878"/><rect x="679" y="152" width="2" height="2" fill="#787878"/><rect x="692" y="152" width="2" height="2" fill="#787878"/><rect x="718" y="152" width="2" height="2" fill="#787878"/><rect x="731" y="152" width="2" height="2" fill="#787878"/><rect x="743" y="152" width="2" height="2" fill="#787878"/><rect x="756" y="152" width="2" height="2" fill="#787878"/><rect x="782" y="152" width="2" height="2" fill="#787878"/><rect x="795" y="152" width="2" height="2" fill="#787878"/><rect x="807" y="152" width="2" height="2" fill="#787878"/><rect x="820" y="152" width="2" height="2" fill="#787878"/><rect x="846" y="152" width="2" height="2" fill="#787878"/><rect x="859" y="152" width="2" height="2" fill="#787878"/><rect x="871" y="152" width="2" height="2" fill="#787878"/><rect x="884" y="152" width="2" height="2" fill="#787878"/><rect x="910" y="152" width="2" height="2" fill="#787878"/><rect x="923" y="152" width="2" height="2" fill="#787878"/><rect x="935" y="152" width="2" height="2" fill="#787878"/><rect x="948" y="152" width="2" height="2" fill="#787878"/><rect x="974" y="152" width="2" height="2" fill="#787878"/><rect x="987" y="152" width="2" height="2" fill="#787878"/><rect x="39" y="216" width="2" height="2" fill="#787878"/><rect x="52" y="216" width="2" height="2" fill="#787878"/><rect x="78" y="216" width="2" height="2" fill="#787878"/><rect x="91" y="216" width="2" height="2" fill="#787878"/><rect x="103" y="216" width="2" height="2" fill="#787878"/><rect x="116" y="216" width="2" height="2" fill="#787878"/><rect x="142" y="216" width="2" height="2" fill="#787878"/><rect x="155" y="216" width="2" height="2" fill="#787878"/><rect x="167" y="216" width="2" height="2" fill="#787878"/><rect x="180" y="216" width="2" height="2" fill="#787878"/><rect x="206" y="216" width="2" height="2" fill="#787878"/><rect x="219" y="216" width="2" height="2" fill="#787878"/><rect x="231" y="216" width="2" height="2" fill="#787878"/><rect x="244" y="216" width="2" height="2" fill="#787878"/><rect x="270" y="216" width="2" height="2" fill="#787878"/><rect x="283" y="216" width="2" height="2" fill="#787878"/><rect x="295" y="216" width="2" height="2" fill="#787878"/><rect x="308" y="216" width="2" height="2" fill="#787878"/><rect x="334" y="216" width="2" height="2" fill="#787878"/><rect x="347" y="216" width="2" height="2" fill="#787878"/><rect x="359" y="216" width="2" height="2" fill="#787878"/><rect x="372" y="216" width="2" height="2" fill="#787878"/><rect x="398" y="216" width="2" height="2" fill="#787878"/><rect x="411" y="216" width="2" height="2" fill="#787878"/><rect x="423" y="216" width="2" height="2" fill="#787878"/><rect x="436" y="216" width="2" height="2" fill="#787878"/><rect x="462" y="216" width="2" height="2" fill="#787878"/><rect x="475" y="216" width="2" height="2" fill="#787878"/><rect x="487" y="216" width="2" height="2" fill="#787878"/><rect x="500" y="216" width="2" height="2" fill="#787878"/><rect x="526" y="216" width="2" height="2" fill="#787878"/><rect x="539" y="216" width="2" height="2" fill="#787878"/><rect x="551" y="216" width="2" height="2" fill="#787878"/><rect x="564" y="216" width="2" height="2" fill="#787878"/><rect x="590" y="216" width="2" height="2" fill="#787878"/><rect x="603" y="216" width="2" height="2" fill="#787878"/><rect x="615" y="216" width="2" height="2" fill="#787878"/><rect x="628" y="216" width="2" height="2" fill="#787878"/><rect x="654" y="216" width="2" height="2" fill="#787878"/><rect x="667" y="216" width="2" height="2" fill="#787878"/><rect x="679" y="216" width="2" height="2" fill="#787878"/><rect x="692" y="216" width="2" height="2" fill="#787878"/><rect x="718" y="216" width="2" height="2" fill="#787878"/><rect x="731" y="216" width="2" height="2" fill="#787878"/><rect x="743" y="216" width="2" height="2" fill="#787878"/><rect x="756" y="216" width="2" height="2" fill="#787878"/><rect x="782" y="216" width="2" height="2" fill="#787878"/><rect x="795" y="216" width="2" height="2" fill="#787878"/><rect x="807" y="216" width="2" height="2" fill="#787878"/><rect x="820" y="216" width="2" height="2" fill="#787878"/><rect x="846" y="216" width="2" height="2" fill="#787878"/><rect x="859" y="216" width="2" height="2" fill="#787878"/><rect x="871" y="216" width="2" height="2" fill="#787878"/><rect x="884" y="216" width="2" height="2" fill="#787878"/><rect x="910" y="216" width="2" height="2" fill="#787878"/><rect x="923" y="216" width="2" height="2" fill="#787878"/><rect x="935" y="216" width="2" height="2" fill="#787878"/><rect x="948" y="216" width="2" height="2" fill="#787878"/><rect x="974" y="216" width="2" height="2" fill="#787878"/><rect x="987" y="216" width="2" height="2" fill="#787878"/><rect x="39" y="280" width="2" height="2" fill="#787878"/><rect x="52" y="280" width="2" height="2" fill="#787878"/><rect x="78" y="280" width="2" height="2" fill="#787878"/><rect x="91" y="280" width="2" height="2" fill="#787878"/><rect x="103" y="280" width="2" height="2" fill="#787878"/><rect x="116" y="280" width="2" height="2" fill="#787878"/><rect x="142" y="280" width="2" height="2" fill="#787878"/><rect x="155" y="280" width="2" height="2" fill="#787878"/><rect x="167" y="280" width="2" height="2" fill="#787878"/><rect x="180" y="280" width="2" height="2" fill="#787878"/><rect x="206" y="280" width="2" height="2" fill="#787878"/><rect x="219" y="280" width="2" height="2" fill="#787878"/><rect x="231" y="280" width="2" height="2" fill="#787878"/><rect x="244" y="280" width="2" height="2" fill="#787878"/><rect x="270" y="280" width="2" height="2" fill="#787878"/><rect x="283" y="280" width="2" height="2" fill="#787878"/><rect x="295" y="280" width="2" height="2" fill="#787878"/><rect x="308" y="280" width="2" height="2" fill="#787878"/><rect x="334" y="280" width="2" height="2" fill="#787878"/><rect x="347" y="280" width="2" height="2" fill="#787878"/><rect x="359" y="280" width="2" height="2" fill="#787878"/><rect x="372" y="280" width="2" height="2" fill="#787878"/><rect x="398" y="280" width="2" height="2" fill="#787878"/><rect x="411" y="280" width="2" height="2" fill="#787878"/><rect x="423" y="280" width="2" height="2" fill="#787878"/><rect x="436" y="280" width="2" height="2" fill="#787878"/><rect x="462" y="280" width="2" height="2" fill="#787878"/><rect x="475" y="280" width="2" height="2" fill="#787878"/><rect x="487" y="280" width="2" height="2" fill="#787878"/><rect x="500" y="280" width="2" height="2" fill="#787878"/><rect x="526" y="280" width="2" height="2" fill="#787878"/><rect x="539" y="280" width="2" height="2" fill="#787878"/><rect x="551" y="280" width="2" height="2" fill="#787878"/><rect x="564" y="280" width="2" height="2" fill="#787878"/><rect x="590" y="280" width="2" height="2" fill="#787878"/><rect x="603" y="280" width="2" height="2" fill="#787878"/><rect x="615" y="280" width="2" height="2" fill="#787878"/><rect x="628" y="280" width="2" height="2" fill="#787878"/><rect x="654" y="280" width="2" height="2" fill="#787878"/><rect x="667" y="280" width="2" height="2" fill="#787878"/><rect x="679" y="280" width="2" height="2" fill="#787878"/><rect x="692" y="280" width="2" height="2" fill="#787878"/><rect x="718" y="280" width="2" height="2" fill="#787878"/><rect x="731" y="280" width="2" height="2" fill="#787878"/><rect x="743" y="280" width="2" height="2" fill="#787878"/><rect x="756" y="280" width="2" height="2" fill="#787878"/><rect x="782" y="280" width="2" height="2" fill="#787878"/><rect x="795" y="280" width="2" height="2" fill="#787878"/><rect x="807" y="280" width="2" height="2" fill="#787878"/><rect x="820" y="280" width="2" height="2" fill="#787878"/><rect x="846" y="280" width="2" height="2" fill="#787878"/><rect x="859" y="280" width="2" height="2" fill="#787878"/><rect x="871" y="280" width="2" height="2" fill="#787878"/><rect x="884" y="280" width="2" height="2" fill="#787878"/><rect x="910" y="280" width="2" height="2" fill="#787878"/><rect x="923" y="280" width="2" height="2" fill="#787878"/><rect x="935" y="280" width="2" height="2" fill="#787878"/><rect x="948" y="280" width="2" height="2" fill="#787878"/><rect x="974" y="280" width="2" height="2" fill="#787878"/><rect x="987" y="280" width="2" height="2" fill="#787878"/><rect x="39" y="344" width="2" height="2" fill="#787878"/><rect x="52" y="344" width="2" height="2" fill="#787878"/><rect x="78" y="344" width="2" height="2" fill="#787878"/><rect x="91" y="344" width="2" height="2" fill="#787878"/><rect x="103" y="344" width="2" height="2" fill="#787878"/><rect x="116" y="344" width="2" height="2" fill="#787878"/><rect x="142" y="344" width="2" height="2" fill="#787878"/><rect x="155" y="344" width="2" height="2" fill="#787878"/><rect x="167" y="344" width="2" height="2" fill="#787878"/><rect x="180" y="344" width="2" height="2" fill="#787878"/><rect x="206" y="344" width="2" height="2" fill="#787878"/><rect x="219" y="344" width="2" height="2" fill="#787878"/><rect x="231" y="344" width="2" height="2" fill="#787878"/><rect x="244" y="344" width="2" height="2" fill="#787878"/><rect x="270" y="344" width="2" height="2" fill="#787878"/><rect x="283" y="344" width="2" height="2" fill="#787878"/><rect x="295" y="344" width="2" height="2" fill="#787878"/><rect x="308" y="344" width="2" height="2" fill="#787878"/><rect x="334" y="344" width="2" height="2" fill="#787878"/><rect x="347" y="344" width="2" height="2" fill="#787878"/><rect x="359" y="344" width="2" height="2" fill="#787878"/><rect x="372" y="344" width="2" height="2" fill="#787878"/><rect x="398" y="344" width="2" height="2" fill="#787878"/><rect x="411" y="344" width="2" height="2" fill="#787878"/><rect x="423" y="344" width="2" height="2" fill="#787878"/><rect x="436" y="344" width="2" height="2" fill="#787878"/><rect x="462" y="344" width="2" height="2" fill="#787878"/><rect x="475" y="344" width="2" height="2" fill="#787878"/><rect x="487" y="344" width="2" height="2" fill="#787878"/><rect x="500" y="344" width="2" height="2" fill="#787878"/><rect x="526" y="344" width="2" height="2" fill="#787878"/><rect x="539" y="344" width="2" height="2" fill="#787878"/><rect x="551" y="344" width="2" height="2" fill="#787878"/><rect x="564" y="344" width="2" height="2" fill="#787878"/><rect x="590" y="344" width="2" height="2" fill="#787878"/><rect x="603" y="344" width="2" height="2" fill="#787878"/><rect x="615" y="344" width="2" height="2" fill="#787878"/><rect x="628" y="344" width="2" height="2" fill="#787878"/><rect x="654" y="344" width="2" height="2" fill="#787878"/><rect x="667" y="344" width="2" height="2" fill="#787878"/><rect x="679" y="344" width="2" height="2" fill="#787878"/><rect x="692" y="344" width="2" height="2" fill="#787878"/><rect x="718" y="344" width="2" height="2" fill="#787878"/><rect x="731" y="344" width="2" height="2" fill="#787878"/><rect x="743" y="344" width="2" height="2" fill="#787878"/><rect x="756" y="344" width="2" height="2" fill="#787878"/><rect x="782" y="344" width="2" height="2" fill="#787878"/><rect x="795" y="344" width="2" height="2" fill="#787878"/><rect x="807" y="344" width="2" height="2" fill="#787878"/><rect x="820" y="344" width="2" height="2" fill="#787878"/><rect x="846" y="344" width="2" height="2" fill="#787878"/><rect x="859" y="344" width="2" height="2" fill="#787878"/><rect x="871" y="344" width="2" height="2" fill="#787878"/><rect x="884" y="344" width="2" height="2" fill="#787878"/><rect x="910" y="344" width="2" height="2" fill="#787878"/><rect x="923" y="344" width="2" height="2" fill="#787878"/><rect x="935" y="344" width="2" height="2" fill="#787878"/><rect x="948" y="344" width="2" height="2" fill="#787878"/><rect x="974" y="344" width="2" height="2" fill="#787878"/><rect x="987" y="344" width="2" height="2" fill="#787878"/><rect x="39" y="408" width="2" height="2" fill="#787878"/><rect x="52" y="408" width="2" height="2" fill="#787878"/><rect x="78" y="408" width="2" height="2" fill="#787878"/><rect x="91" y="408" width="2" height="2" fill="#787878"/><rect x="103" y="408" width="2" height="2" fill="#787878"/><rect x="116" y="408" width="2" height="2" fill="#787878"/><rect x="142" y="408" width="2" height="2" fill="#787878"/><rect x="155" y="408" width="2" height="2" fill="#787878"/><rect x="167" y="408" width="2" height="2" fill="#787878"/><rect x="180" y="408" width="2" height="2" fill="#787878"/><rect x="206" y="408" width="2" height="2" fill="#787878"/><rect x="219" y="408" width="2" height="2" fill="#787878"/><rect x="231" y="408" width="2" height="2" fill="#787878"/><rect x="244" y="408" width="2" height="2" fill="#787878"/><rect x="270" y="408" width="2" height="2" fill="#787878"/><rect x="283" y="408" width="2" height="2" fill="#787878"/><rect x="295" y="408" width="2" height="2" fill="#787878"/><rect x="308" y="408" width="2" height="2" fill="#787878"/><rect x="334" y="408" width="2" height="2" fill="#787878"/><rect x="347" y="408" width="2" height="2" fill="#787878"/><rect x="359" y="408" width="2" height="2" fill="#787878"/><rect x="372" y="408" width="2" height="2" fill="#787878"/><rect x="398" y="408" width="2" height="2" fill="#787878"/><rect x="411" y="408" width="2" height="2" fill="#787878"/><rect x="423" y="408" width="2" height="2" fill="#787878"/><rect x="436" y="408" width="2" height="2" fill="#787878"/><rect x="462" y="408" width="2" height="2" fill="#787878"/><rect x="475" y="408" width="2" height="2" fill="#787878"/><rect x="487" y="408" width="2" height="2" fill="#787878"/><rect x="500" y="408" width="2" height="2" fill="#787878"/><rect x="526" y="408" width="2" height="2" fill="#787878"/><rect x="539" y="408" width="2" height="2" fill="#787878"/><rect x="551" y="408" width="2" height="2" fill="#787878"/><rect x="564" y="408" width="2" height="2" fill="#787878"/><rect x="590" y="408" width="2" height="2" fill="#787878"/><rect x="603" y="408" width="2" height="2" fill="#787878"/><rect x="615" y="408" width="2" height="2" fill="#787878"/><rect x="628" y="408" width="2" height="2" fill="#787878"/><rect x="654" y="408" width="2" height="2" fill="#787878"/><rect x="667" y="408" width="2" height="2" fill="#787878"/><rect x="679" y="408" width="2" height="2" fill="#787878"/><rect x="692" y="408" width="2" height="2" fill="#787878"/><rect x="718" y="408" width="2" height="2" fill="#787878"/><rect x="731" y="408" width="2" height="2" fill="#787878"/><rect x="743" y="408" width="2" height="2" fill="#787878"/><rect x="756" y="408" width="2" height="2" fill="#787878"/><rect x="782" y="408" width="2" height="2" fill="#787878"/><rect x="795" y="408" width="2" height="2" fill="#787878"/><rect x="807" y="408" width="2" height="2" fill="#787878"/><rect x="820" y="408" width="2" height="2" fill="#787878"/><rect x="846" y="408" width="2" height="2" fill="#787878"/><rect x="859" y="408" width="2" height="2" fill="#787878"/><rect x="871" y="408" width="2" height="2" fill="#787878"/><rect x="884" y="408" width="2" height="2" fill="#787878"/><rect x="910" y="408" width="2" height="2" fill="#787878"/><rect x="923" y="408" width="2" height="2" fill="#787878"/><rect x="935" y="408" width="2" height="2" fill="#787878"/><rect x="948" y="408" width="2" height="2" fill="#787878"/><rect x="974" y="408" width="2" height="2" fill="#787878"/><rect x="987" y="408" width="2" height="2" fill="#787878"/><rect x="39" y="472" width="2" height="2" fill="#787878"/><rect x="52" y="472" width="2" height="2" fill="#787878"/><rect x="78" y="472" width="2" height="2" fill="#787878"/><rect x="91" y="472" width="2" height="2" fill="#787878"/><rect x="103" y="472" width="2" height="2" fill="#787878"/><rect x="116" y="472" width="2" height="2" fill="#787878"/><rect x="142" y="472" width="2" height="2" fill="#787878"/><rect x="155" y="472" width="2" height="2" fill="#787878"/><rect x="167" y="472" width="2" height="2" fill="#787878"/><rect x="180" y="472" width="2" height="2" fill="#787878"/><rect x="206" y="472" width="2" height="2" fill="#787878"/><rect x="219" y="472" width="2" height="2" fill="#787878"/><rect x="231" y="472" width="2" height="2" fill="#787878"/><rect x="244" y="472" width="2" height="2" fill="#787878"/><rect x="270" y="472" width="2" height="2" fill="#787878"/><rect x="283" y="472" width="2" height="2" fill="#787878"/><rect x="295" y="472" width="2" height="2" fill="#787878"/><rect x="308" y="472" width="2" height="2" fill="#787878"/><rect x="334" y="472" width="2" height="2" fill="#787878"/><rect x="347" y="472" width="2" height="2" fill="#787878"/><rect x="359" y="472" width="2" height="2" fill="#787878"/><rect x="372" y="472" width="2" height="2" fill="#787878"/><rect x="398" y="472" width="2" height="2" fill="#787878"/><rect x="411" y="472" width="2" height="2" fill="#787878"/><rect x="423" y="472" width="2" height="2" fill="#787878"/><rect x="436" y="472" width="2" height="2" fill="#787878"/><rect x="462" y="472" width="2" height="2" fill="#787878"/><rect x="475" y="472" width="2" height="2" fill="#787878"/><rect x="487" y="472" width="2" height="2" fill="#787878"/><rect x="500" y="472" width="2" height="2" fill="#787878"/><rect x="526" y="472" width="2" height="2" fill="#787878"/><rect x="539" y="472" width="2" height="2" fill="#787878"/><rect x="551" y="472" width="2" height="2" fill="#787878"/><rect x="564" y="472" width="2" height="2" fill="#787878"/><rect x="590" y="472" width="2" height="2" fill="#787878"/><rect x="603" y="472" width="2" height="2" fill="#787878"/><rect x="615" y="472" width="2" height="2" fill="#787878"/><rect x="628" y="472" width="2" height="2" fill="#787878"/><rect x="654" y="472" width="2" height="2" fill="#787878"/><rect x="667" y="472" width="2" height="2" fill="#787878"/><rect x="679" y="472" width="2" height="2" fill="#787878"/><rect x="692" y="472" width="2" height="2" fill="#787878"/><rect x="718" y="472" width="2" height="2" fill="#787878"/><rect x="731" y="472" width="2" height="2" fill="#787878"/><rect x="743" y="472" width="2" height="2" fill="#787878"/><rect x="756" y="472" width="2" height="2" fill="#787878"/><rect x="782" y="472" width="2" height="2" fill="#787878"/><rect x="795" y="472" width="2" height="2" fill="#787878"/><rect x="807" y="472" width="2" height="2" fill="#787878"/><rect x="820" y="472" width="2" height="2" fill="#787878"/><rect x="846" y="472" width="2" height="2" fill="#787878"/><rect x="859" y="472" width="2" height="2" fill="#787878"/><rect x="871" y="472" width="2" height="2" fill="#787878"/><rect x="884" y="472" width="2" height="2" fill="#787878"/><rect x="910" y="472" width="2" height="2" fill="#787878"/><rect x="923" y="472" width="2" height="2" fill="#787878"/><rect x="935" y="472" width="2" height="2" fill="#787878"/><rect x="948" y="472" width="2" height="2" fill="#787878"/><rect x="974" y="472" width="2" height="2" fill="#787878"/><rect x="987" y="472" width="2" height="2" fill="#787878"/><rect x="39" y="536" width="2" height="2" fill="#787878"/><rect x="52" y="536" width="2" height="2" fill="#787878"/><rect x="78" y="536" width="2" height="2" fill="#787878"/><rect x="91" y="536" width="2" height="2" fill="#787878"/><rect x="103" y="536" width="2" height="2" fill="#787878"/><rect x="116" y="536" width="2" height="2" fill="#787878"/><rect x="142" y="536" width="2" height="2" fill="#787878"/><rect x="155" y="536" width="2" height="2" fill="#787878"/><rect x="167" y="536" width="2" height="2" fill="#787878"/><rect x="180" y="536" width="2" height="2" fill="#787878"/><rect x="206" y="536" width="2" height="2" fill="#787878"/><rect x="219" y="536" width="2" height="2" fill="#787878"/><rect x="231" y="536" width="2" height="2" fill="#787878"/><rect x="244" y="536" width="2" height="2" fill="#787878"/><rect x="270" y="536" width="2" height="2" fill="#787878"/><rect x="283" y="536" width="2" height="2" fill="#787878"/><rect x="295" y="536" width="2" height="2" fill="#787878"/><rect x="308" y="536" width="2" height="2" fill="#787878"/><rect x="334" y="536" width="2" height="2" fill="#787878"/><rect x="347" y="536" width="2" height="2" fill="#787878"/><rect x="359" y="536" width="2" height="2" fill="#787878"/><rect x="372" y="536" width="2" height="2" fill="#787878"/><rect x="398" y="536" width="2" height="2" fill="#787878"/><rect x="411" y="536" width="2" height="2" fill="#787878"/><rect x="423" y="536" width="2" height="2" fill="#787878"/><rect x="436" y="536" width="2" height="2" fill="#787878"/><rect x="462" y="536" width="2" height="2" fill="#787878"/><rect x="475" y="536" width="2" height="2" fill="#787878"/><rect x="487" y="536" width="2" height="2" fill="#787878"/><rect x="500" y="536" width="2" height="2" fill="#787878"/><rect x="526" y="536" width="2" height="2" fill="#787878"/><rect x="539" y="536" width="2" height="2" fill="#787878"/><rect x="551" y="536" width="2" height="2" fill="#787878"/><rect x="564" y="536" width="2" height="2" fill="#787878"/><rect x="590" y="536" width="2" height="2" fill="#787878"/><rect x="603" y="536" width="2" height="2" fill="#787878"/><rect x="615" y="536" width="2" height="2" fill="#787878"/><rect x="628" y="536" width="2" height="2" fill="#787878"/><rect x="654" y="536" width="2" height="2" fill="#787878"/><rect x="667" y="536" width="2" height="2" fill="#787878"/><rect x="679" y="536" width="2" height="2" fill="#787878"/><rect x="692" y="536" width="2" height="2" fill="#787878"/><rect x="718" y="536" width="2" height="2" fill="#787878"/><rect x="731" y="536" width="2" height="2" fill="#787878"/><rect x="743" y="536" width="2" height="2" fill="#787878"/><rect x="756" y="536" width="2" height="2" fill="#787878"/><rect x="782" y="536" width="2" height="2" fill="#787878"/><rect x="795" y="536" width="2" height="2" fill="#787878"/><rect x="807" y="536" width="2" height="2" fill="#787878"/><rect x="820" y="536" width="2" height="2" fill="#787878"/><rect x="846" y="536" width="2" height="2" fill="#787878"/><rect x="859" y="536" width="2" height="2" fill="#787878"/><rect x="871" y="536" width="2" height="2" fill="#787878"/><rect x="884" y="536" width="2" height="2" fill="#787878"/><rect x="910" y="536" width="2" height="2" fill="#787878"/><rect x="923" y="536" width="2" height="2" fill="#787878"/><rect x="935" y="536" width="2" height="2" fill="#787878"/><rect x="948" y="536" width="2" height="2" fill="#787878"/><rect x="974" y="536" width="2" height="2" fill="#787878"/><rect x="987" y="536" width="2" height="2" fill="#787878"/><rect x="39" y="600" width="2" height="2" fill="#787878"/><rect x="52" y="600" width="2" height="2" fill="#787878"/><rect x="78" y="600" width="2" height="2" fill="#787878"/><rect x="91" y="600" width="2" height="2" fill="#787878"/><rect x="103" y="600" width="2" height="2" fill="#787878"/><rect x="116" y="600" width="2" height="2" fill="#787878"/><rect x="142" y="600" width="2" height="2" fill="#787878"/><rect x="155" y="600" width="2" height="2" fill="#787878"/><rect x="167" y="600" width="2" height="2" fill="#787878"/><rect x="180" y="600" width="2" height="2" fill="#787878"/><rect x="206" y="600" width="2" height="2" fill="#787878"/><rect x="219" y="600" width="2" height="2" fill="#787878"/><rect x="231" y="600" width="2" height="2" fill="#787878"/><rect x="244" y="600" width="2" height="2" fill="#787878"/><rect x="270" y="600" width="2" height="2" fill="#787878"/><rect x="283" y="600" width="2" height="2" fill="#787878"/><rect x="295" y="600" width="2" height="2" fill="#787878"/><rect x="308" y="600" width="2" height="2" fill="#787878"/><rect x="334" y="600" width="2" height="2" fill="#787878"/><rect x="347" y="600" width="2" height="2" fill="#787878"/><rect x="359" y="600" width="2" height="2" fill="#787878"/><rect x="372" y="600" width="2" height="2" fill="#787878"/><rect x="398" y="600" width="2" height="2" fill="#787878"/><rect x="411" y="600" width="2" height="2" fill="#787878"/><rect x="423" y="600" width="2" height="2" fill="#787878"/><rect x="436" y="600" width="2" height="2" fill="#787878"/><rect x="462" y="600" width="2" height="2" fill="#787878"/><rect x="475" y="600" width="2" height="2" fill="#787878"/><rect x="487" y="600" width="2" height="2" fill="#787878"/><rect x="500" y="600" width="2" height="2" fill="#787878"/><rect x="526" y="600" width="2" height="2" fill="#787878"/><rect x="539" y="600" width="2" height="2" fill="#787878"/><rect x="551" y="600" width="2" height="2" fill="#787878"/><rect x="564" y="600" width="2" height="2" fill="#787878"/><rect x="590" y="600" width="2" height="2" fill="#787878"/><rect x="603" y="600" width="2" height="2" fill="#787878"/><rect x="615" y="600" width="2" height="2" fill="#787878"/><rect x="628" y="600" width="2" height="2" fill="#787878"/><rect x="654" y="600" width="2" height="2" fill="#787878"/><rect x="667" y="600" width="2" height="2" fill="#787878"/><rect x="679" y="600" width="2" height="2" fill="#787878"/><rect x="692" y="600" width="2" height="2" fill="#787878"/><rect x="718" y="600" width="2" height="2" fill="#787878"/><rect x="731" y="600" width="2" height="2" fill="#787878"/><rect x="743" y="600" width="2" height="2" fill="#787878"/><rect x="756" y="600" width="2" height="2" fill="#787878"/><rect x="782" y="600" width="2" height="2" fill="#787878"/><rect x="795" y="600" width="2" height="2" fill="#787878"/><rect x="807" y="600" width="2" height="2" fill="#787878"/><rect x="820" y="600" width="2" height="2" fill="#787878"/><rect x="846" y="600" width="2" height="2" fill="#787878"/><rect x="859" y="600" width="2" height="2" fill="#787878"/><rect x="871" y="600" width="2" height="2" fill="#787878"/><rect x="884" y="600" width="2" height="2" fill="#787878"/><rect x="910" y="600" width="2" height="2" fill="#787878"/><rect x="923" y="600" width="2" height="2" fill="#787878"/><rect x="935" y="600" width="2" height="2" fill="#787878"/><rect x="948" y="600" width="2" height="2" fill="#787878"/><rect x="974" y="600" width="2" height="2" fill="#787878"/><rect x="987" y="600" width="2" height="2" fill="#787878"/><rect x="512" y="37" width="4" height="2" fill="#c0c0c0"/><rect x="512" y="50" width="4" height="2" fill="#c0c0c0"/><rect x="512" y="62" width="4" height="2" fill="#c0c0c0"/><rect x="512" y="75" width="4" height="2" fill="#c0c0c0"/><rect x="512" y="88" width="4" height="2" fill="#c0c0c0"/><rect x="512" y="101" width="4" height="2" fill="#c0c0c0"/><rect x="512" y="114" width="4" height="2" fill="#c0c0c0"/><rect x="512" y="126" width="4" height="2" fill="#c0c0c0"/><rect x="512" y="139" width="4" height="2" fill="#c0c0c0"/><rect x="512" y="152" width="4" height="2" fill="#c0c0c0"/><rect x="512" y="165" width="4" height="2" fill="#c0c0c0"/><rect x="512" y="178" width="4" height="2" fill="#c0c0c0"/><rect x="512" y="190" width="4" height="2" fill="#c0c0c0"/><rect x="512" y="203" width="4" height="2" fill="#c0c0c0"/><rect x="512" y="216" width="4" height="2" fill="#c0c0c0"/><rect x="512" y="229" width="4" height="2" fill="#c0c0c0"/><rect x="512" y="242" width="4" height="2" fill="#c0c0c0"/><rect x="512" y="254" width="4" height="2" fill="#c0c0c0"/><rect x="512" y="267" width="4" height="2" fill="#c0c0c0"/><rect x="512" y="280" width="4" height="2" fill="#c0c0c0"/><rect x="512" y="293" width="4" height="2" fill="#c0c0c0"/><rect x="512" y="306" width="4" height="2" fill="#c0c0c0"/><rect x="512" y="318" width="4" height="2" fill="#c0c0c0"/><rect x="512" y="331" width="4" height="2" fill="#c0c0c0"/><rect x="512" y="344" width="4" height="2" fill="#c0c0c0"/><rect x="512" y="357" width="4" height="2" fill="#c0c0c0"/><rect x="512" y="370" width="4" height="2" fill="#c0c0c0"/><rect x="512" y="382" width="4" height="2" fill="#c0c0c0"/><rect x="512" y="395" width="4" height="2" fill="#c0c0c0"/><rect x="512" y="408" width="4" height="2" fill="#c0c0c0"/><rect x="512" y="421" width="4" height="2" fill="#c0c0c0"/><rect x="512" y="434" width="4" height="2" fill="#c0c0c0"/><rect x="512" y="446" width="4" height="2" fill="#c0c0c0"/><rect x="512" y="459" width="4" height="2" fill="#c0c0c0"/><rect x="512" y="472" width="4" height="2" fill="#c0c0c0"/><rect x="512" y="485" width="4" height="2" fill="#c0c0c0"/><rect x="512" y="498" width="4" height="2" fill="#c0c0c0"/><rect x="512" y="510" width="4" height="2" fill="#c0c0c0"/><rect x="512" y="523" width="4" height="2" fill="#c0c0c0"/><rect x="512" y="536" width="4" height="2" fill="#c0c0c0"/><rect x="512" y="549" width="4" height="2" fill="#c0c0c0"/><rect x="512" y="562" width="4" height="2" fill="#c0c0c0"/><rect x="512" y="574" width="4" height="2" fill="#c0c0c0"/><rect x="512" y="587" width="4" height="2" fill="#c0c0c0"/><rect x="512" y="600" width="4" height="2" fill="#c0c0c0"/><rect x="512" y="613" width="4" height="2" fill="#c0c0c0"/><rect x="512" y="626" width="4" height="2" fill="#c0c0c0"/><rect x="512" y="638" width="4" height="2" fill="#c0c0c0"/><rect x="512" y="651" width="4" height="2" fill="#c0c0c0"/><rect x="39" y="343" width="2" height="4" fill="#a8a8a8"/><rect x="52" y="343" width="2" height="4" fill="#a8a8a8"/><rect x="65" y="343" width="2" height="4" fill="#a8a8a8"/><rect x="78" y="343" width="2" height="4" fill="#a8a8a8"/><rect x="91" y="343" width="2" height="4" fill="#a8a8a8"/><rect x="103" y="343" width="2" height="4" fill="#a8a8a8"/><rect x="116" y="343" width="2" height="4" fill="#a8a8a8"/><rect x="129" y="343" width="2" height="4" fill="#a8a8a8"/><rect x="142" y="343" width="2" height="4" fill="#a8a8a8"/><rect x="155" y="343" width="2" height="4" fill="#a8a8a8"/><rect x="167" y="343" width="2" height="4" fill="#a8a8a8"/><rect x="180" y="343" width="2" height="4" fill="#a8a8a8"/><rect x="193" y="343" width="2" height="4" fill="#a8a8a8"/><rect x="206" y="343" width="2" height="4" fill="#a8a8a8"/><rect x="219" y="343" width="2" height="4" fill="#a8a8a8"/><rect x="231" y="343" width="2" height="4" fill="#a8a8a8"/><rect x="244" y="343" width="2" height="4" fill="#a8a8a8"/><rect x="257" y="343" width="2" height="4" fill="#a8a8a8"/><rect x="270" y="343" width="2" height="4" fill="#a8a8a8"/><rect x="283" y="343" width="2" height="4" fill="#a8a8a8"/><rect x="295" y="343" width="2" height="4" fill="#a8a8a8"/><rect x="308" y="343" width="2" height="4" fill="#a8a8a8"/><rect x="321" y="343" width="2" height="4" fill="#a8a8a8"/><rect x="334" y="343" width="2" height="4" fill="#a8a8a8"/><rect x="347" y="343" width="2" height="4" fill="#a8a8a8"/><rect x="359" y="343" width="2" height="4" fill="#a8a8a8"/><rect x="372" y="343" width="2" height="4" fill="#a8a8a8"/><rect x="385" y="343" width="2" height="4" fill="#a8a8a8"/><rect x="398" y="343" width="2" height="4" fill="#a8a8a8"/><rect x="411" y="343" width="2" height="4" fill="#a8a8a8"/><rect x="423" y="343" width="2" height="4" fill="#a8a8a8"/><rect x="436" y="343" width="2" height="4" fill="#a8a8a8"/><rect x="449" y="343" width="2" height="4" fill="#a8a8a8"/><rect x="462" y="343" width="2" height="4" fill="#a8a8a8"/><rect x="475" y="343" width="2" height="4" fill="#a8a8a8"/><rect x="487" y="343" width="2" height="4" fill="#a8a8a8"/><rect x="500" y="343" width="2" height="4" fill="#a8a8a8"/><rect x="513" y="343" width="2" height="4" fill="#a8a8a8"/><rect x="526" y="343" width="2" height="4" fill="#a8a8a8"/><rect x="539" y="343" width="2" height="4" fill="#a8a8a8"/><rect x="551" y="343" width="2" height="4" fill="#a8a8a8"/><rect x="564" y="343" width="2" height="4" fill="#a8a8a8"/><rect x="577" y="343" width="2" height="4" fill="#a8a8a8"/><rect x="590" y="343" width="2" height="4" fill="#a8a8a8"/><rect x="603" y="343" width="2" height="4" fill="#a8a8a8"/><rect x="615" y="343" width="2" height="4" fill="#a8a8a8"/><rect x="628" y="343" width="2" height="4" fill="#a8a8a8"/><rect x="641" y="343" width="2" height="4" fill="#a8a8a8"/><rect x="654" y="343" width="2" height="4" fill="#a8a8a8"/><rect x="667" y="343" width="2" height="4" fill="#a8a8a8"/><rect x="679" y="343" width="2" height="4" fill="#a8a8a8"/><rect x="692" y="343" width="2" height="4" fill="#a8a8a8"/><rect x="705" y="343" width="2" height="4" fill="#a8a8a8"/><rect x="718" y="343" width="2" height="4" fill="#a8a8a8"/><rect x="731" y="343" width="2" height="4" fill="#a8a8a8"/><rect x="743" y="343" width="2" height="4" fill="#a8a8a8"/><rect x="756" y="343" width="2" height="4" fill="#a8a8a8"/><rect x="769" y="343" width="2" height="4" fill="#a8a8a8"/><rect x="782" y="343" width="2" height="4" fill="#a8a8a8"/><rect x="795" y="343" width="2" height="4" fill="#a8a8a8"/><rect x="807" y="343" width="2" height="4" fill="#a8a8a8"/><rect x="820" y="343" width="2" height="4" fill="#a8a8a8"/><rect x="833" y="343" width="2" height="4" fill="#a8a8a8"/><rect x="846" y="343" width="2" height="4" fill="#a8a8a8"/><rect x="859" y="343" width="2" height="4" fill="#a8a8a8"/><rect x="871" y="343" width="2" height="4" fill="#a8a8a8"/><rect x="884" y="343" width="2" height="4" fill="#a8a8a8"/><rect x="897" y="343" width="2" height="4" fill="#a8a8a8"/><rect x="910" y="343" width="2" height="4" fill="#a8a8a8"/><rect x="923" y="343" width="2" height="4" fill="#a8a8a8"/><rect x="935" y="343" width="2" height="4" fill="#a8a8a8"/><rect x="948" y="343" width="2" height="4" fill="#a8a8a8"/><rect x="961" y="343" width="2" height="4" fill="#a8a8a8"/><rect x="974" y="343" width="2" height="4" fill="#a8a8a8"/><rect x="987" y="343" width="2" height="4" fill="#a8a8a8"/><rect x="187" y="344" width="14" height="2" fill="#c0c0c0"/><rect x="193" y="338" width="2" height="14" fill="#c0c0c0"/><rect x="827" y="344" width="14" height="2" fill="#c0c0c0"/><rect x="833" y="338" width="2" height="14" fill="#c0c0c0"/><rect x="39" y="27" width="2" height="3" fill="#d4d4d4"/><rect x="39" y="659" width="2" height="3" fill="#d4d4d4"/><rect x="52" y="27" width="2" height="3" fill="#d4d4d4"/><rect x="52" y="659" width="2" height="3" fill="#d4d4d4"/><rect x="65" y="27" width="2" height="7" fill="#d4d4d4"/><rect x="65" y="655" width="2" height="7" fill="#d4d4d4"/><rect x="78" y="27" width="2" height="3" fill="#d4d4d4"/><rect x="78" y="659" width="2" height="3" fill="#d4d4d4"/><rect x="91" y="27" width="2" height="3" fill="#d4d4d4"/><rect x="91" y="659" width="2" height="3" fill="#d4d4d4"/><rect x="103" y="27" width="2" height="3" fill="#d4d4d4"/><rect x="103" y="659" width="2" height="3" fill="#d4d4d4"/><rect x="116" y="27" width="2" height="3" fill="#d4d4d4"/><rect x="116" y="659" width="2" height="3" fill="#d4d4d4"/><rect x="129" y="27" width="2" height="7" fill="#d4d4d4"/><rect x="129" y="655" width="2" height="7" fill="#d4d4d4"/><rect x="142" y="27" width="2" height="3" fill="#d4d4d4"/><rect x="142" y="659" width="2" height="3" fill="#d4d4d4"/><rect x="155" y="27" width="2" height="3" fill="#d4d4d4"/><rect x="155" y="659" width="2" height="3" fill="#d4d4d4"/><rect x="167" y="27" width="2" height="3" fill="#d4d4d4"/><rect x="167" y="659" width="2" height="3" fill="#d4d4d4"/><rect x="180" y="27" width="2" height="3" fill="#d4d4d4"/><rect x="180" y="659" width="2" height="3" fill="#d4d4d4"/><rect x="193" y="27" width="2" height="7" fill="#d4d4d4"/><rect x="193" y="655" width="2" height="7" fill="#d4d4d4"/><rect x="206" y="27" width="2" height="3" fill="#d4d4d4"/><rect x="206" y="659" width="2" height="3" fill="#d4d4d4"/><rect x="219" y="27" width="2" height="3" fill="#d4d4d4"/><rect x="219" y="659" width="2" height="3" fill="#d4d4d4"/><rect x="231" y="27" width="2" height="3" fill="#d4d4d4"/><rect x="231" y="659" width="2" height="3" fill="#d4d4d4"/><rect x="244" y="27" width="2" height="3" fill="#d4d4d4"/><rect x="244" y="659" width="2" height="3" fill="#d4d4d4"/><rect x="257" y="27" width="2" height="7" fill="#d4d4d4"/><rect x="257" y="655" width="2" height="7" fill="#d4d4d4"/><rect x="270" y="27" width="2" height="3" fill="#d4d4d4"/><rect x="270" y="659" width="2" height="3" fill="#d4d4d4"/><rect x="283" y="27" width="2" height="3" fill="#d4d4d4"/><rect x="283" y="659" width="2" height="3" fill="#d4d4d4"/><rect x="295" y="27" width="2" height="3" fill="#d4d4d4"/><rect x="295" y="659" width="2" height="3" fill="#d4d4d4"/><rect x="308" y="27" width="2" height="3" fill="#d4d4d4"/><rect x="308" y="659" width="2" height="3" fill="#d4d4d4"/><rect x="321" y="27" width="2" height="7" fill="#d4d4d4"/><rect x="321" y="655" width="2" height="7" fill="#d4d4d4"/><rect x="334" y="27" width="2" height="3" fill="#d4d4d4"/><rect x="334" y="659" width="2" height="3" fill="#d4d4d4"/><rect x="347" y="27" width="2" height="3" fill="#d4d4d4"/><rect x="347" y="659" width="2" height="3" fill="#d4d4d4"/><rect x="359" y="27" width="2" height="3" fill="#d4d4d4"/><rect x="359" y="659" width="2" height="3" fill="#d4d4d4"/><rect x="372" y="27" width="2" height="3" fill="#d4d4d4"/><rect x="372" y="659" width="2" height="3" fill="#d4d4d4"/><rect x="385" y="27" width="2" height="7" fill="#d4d4d4"/><rect x="385" y="655" width="2" height="7" fill="#d4d4d4"/><rect x="398" y="27" width="2" height="3" fill="#d4d4d4"/><rect x="398" y="659" width="2" height="3" fill="#d4d4d4"/><rect x="411" y="27" width="2" height="3" fill="#d4d4d4"/><rect x="411" y="659" width="2" height="3" fill="#d4d4d4"/><rect x="423" y="27" width="2" height="3" fill="#d4d4d4"/><rect x="423" y="659" width="2" height="3" fill="#d4d4d4"/><rect x="436" y="27" width="2" height="3" fill="#d4d4d4"/><rect x="436" y="659" width="2" height="3" fill="#d4d4d4"/><rect x="449" y="27" width="2" height="7" fill="#d4d4d4"/><rect x="449" y="655" width="2" height="7" fill="#d4d4d4"/><rect x="462" y="27" width="2" height="3" fill="#d4d4d4"/><rect x="462" y="659" width="2" height="3" fill="#d4d4d4"/><rect x="475" y="27" width="2" height="3" fill="#d4d4d4"/><rect x="475" y="659" width="2" height="3" fill="#d4d4d4"/><rect x="487" y="27" width="2" height="3" fill="#d4d4d4"/><rect x="487" y="659" width="2" height="3" fill="#d4d4d4"/><rect x="500" y="27" width="2" height="3" fill="#d4d4d4"/><rect x="500" y="659" width="2" height="3" fill="#d4d4d4"/><rect x="513" y="27" width="2" height="7" fill="#d4d4d4"/><rect x="513" y="655" width="2" height="7" fill="#d4d4d4"/><rect x="526" y="27" width="2" height="3" fill="#d4d4d4"/><rect x="526" y="659" width="2" height="3" fill="#d4d4d4"/><rect x="539" y="27" width="2" height="3" fill="#d4d4d4"/><rect x="539" y="659" width="2" height="3" fill="#d4d4d4"/><rect x="551" y="27" width="2" height="3" fill="#d4d4d4"/><rect x="551" y="659" width="2" height="3" fill="#d4d4d4"/><rect x="564" y="27" width="2" height="3" fill="#d4d4d4"/><rect x="564" y="659" width="2" height="3" fill="#d4d4d4"/><rect x="577" y="27" width="2" height="7" fill="#d4d4d4"/><rect x="577" y="655" width="2" height="7" fill="#d4d4d4"/><rect x="590" y="27" width="2" height="3" fill="#d4d4d4"/><rect x="590" y="659" width="2" height="3" fill="#d4d4d4"/><rect x="603" y="27" width="2" height="3" fill="#d4d4d4"/><rect x="603" y="659" width="2" height="3" fill="#d4d4d4"/><rect x="615" y="27" width="2" height="3" fill="#d4d4d4"/><rect x="615" y="659" width="2" height="3" fill="#d4d4d4"/><rect x="628" y="27" width="2" height="3" fill="#d4d4d4"/><rect x="628" y="659" width="2" height="3" fill="#d4d4d4"/><rect x="641" y="27" width="2" height="7" fill="#d4d4d4"/><rect x="641" y="655" width="2" height="7" fill="#d4d4d4"/><rect x="654" y="27" width="2" height="3" fill="#d4d4d4"/><rect x="654" y="659" width="2" height="3" fill="#d4d4d4"/><rect x="667" y="27" width="2" height="3" fill="#d4d4d4"/><rect x="667" y="659" width="2" height="3" fill="#d4d4d4"/><rect x="679" y="27" width="2" height="3" fill="#d4d4d4"/><rect x="679" y="659" width="2" height="3" fill="#d4d4d4"/><rect x="692" y="27" width="2" height="3" fill="#d4d4d4"/><rect x="692" y="659" width="2" height="3" fill="#d4d4d4"/><rect x="705" y="27" width="2" height="7" fill="#d4d4d4"/><rect x="705" y="655" width="2" height="7" fill="#d4d4d4"/><rect x="718" y="27" width="2" height="3" fill="#d4d4d4"/><rect x="718" y="659" width="2" height="3" fill="#d4d4d4"/><rect x="731" y="27" width="2" height="3" fill="#d4d4d4"/><rect x="731" y="659" width="2" height="3" fill="#d4d4d4"/><rect x="743" y="27" width="2" height="3" fill="#d4d4d4"/><rect x="743" y="659" width="2" height="3" fill="#d4d4d4"/><rect x="756" y="27" width="2" height="3" fill="#d4d4d4"/><rect x="756" y="659" width="2" height="3" fill="#d4d4d4"/><rect x="769" y="27" width="2" height="7" fill="#d4d4d4"/><rect x="769" y="655" width="2" height="7" fill="#d4d4d4"/><rect x="782" y="27" width="2" height="3" fill="#d4d4d4"/><rect x="782" y="659" width="2" height="3" fill="#d4d4d4"/><rect x="795" y="27" width="2" height="3" fill="#d4d4d4"/><rect x="795" y="659" width="2" height="3" fill="#d4d4d4"/><rect x="807" y="27" width="2" height="3" fill="#d4d4d4"/><rect x="807" y="659" width="2" height="3" fill="#d4d4d4"/><rect x="820" y="27" width="2" height="3" fill="#d4d4d4"/><rect x="820" y="659" width="2" height="3" fill="#d4d4d4"/><rect x="833" y="27" width="2" height="7" fill="#d4d4d4"/><rect x="833" y="655" width="2" height="7" fill="#d4d4d4"/><rect x="846" y="27" width="2" height="3" fill="#d4d4d4"/><rect x="846" y="659" width="2" height="3" fill="#d4d4d4"/><rect x="859" y="27" width="2" height="3" fill="#d4d4d4"/><rect x="859" y="659" width="2" height="3" fill="#d4d4d4"/><rect x="871" y="27" width="2" height="3" fill="#d4d4d4"/><rect x="871" y="659" width="2" height="3" fill="#d4d4d4"/><rect x="884" y="27" width="2" height="3" fill="#d4d4d4"/><rect x="884" y="659" width="2" height="3" fill="#d4d4d4"/><rect x="897" y="27" width="2" height="7" fill="#d4d4d4"/><rect x="897" y="655" width="2" height="7" fill="#d4d4d4"/><rect x="910" y="27" width="2" height="3" fill="#d4d4d4"/><rect x="910" y="659" width="2" height="3" fill="#d4d4d4"/><rect x="923" y="27" width="2" height="3" fill="#d4d4d4"/><rect x="923" y="659" width="2" height="3" fill="#d4d4d4"/><rect x="935" y="27" width="2" height="3" fill="#d4d4d4"/><rect x="935" y="659" width="2" height="3" fill="#d4d4d4"/><rect x="948" y="27" width="2" height="3" fill="#d4d4d4"/><rect x="948" y="659" width="2" height="3" fill="#d4d4d4"/><rect x="961" y="27" width="2" height="7" fill="#d4d4d4"/><rect x="961" y="655" width="2" height="7" fill="#d4d4d4"/><rect x="974" y="27" width="2" height="3" fill="#d4d4d4"/><rect x="974" y="659" width="2" height="3" fill="#d4d4d4"/><rect x="987" y="27" width="2" height="3" fill="#d4d4d4"/><rect x="987" y="659" width="2" height="3" fill="#d4d4d4"/><rect x="28" y="37" width="3" height="2" fill="#d4d4d4"/><rect x="992" y="37" width="4" height="2" fill="#d4d4d4"/><rect x="28" y="50" width="3" height="2" fill="#d4d4d4"/><rect x="992" y="50" width="4" height="2" fill="#d4d4d4"/><rect x="28" y="62" width="3" height="2" fill="#d4d4d4"/><rect x="992" y="62" width="4" height="2" fill="#d4d4d4"/><rect x="28" y="75" width="3" height="2" fill="#d4d4d4"/><rect x="992" y="75" width="4" height="2" fill="#d4d4d4"/><rect x="28" y="88" width="8" height="2" fill="#d4d4d4"/><rect x="987" y="88" width="9" height="2" fill="#d4d4d4"/><rect x="28" y="101" width="3" height="2" fill="#d4d4d4"/><rect x="992" y="101" width="4" height="2" fill="#d4d4d4"/><rect x="28" y="114" width="3" height="2" fill="#d4d4d4"/><rect x="992" y="114" width="4" height="2" fill="#d4d4d4"/><rect x="28" y="126" width="3" height="2" fill="#d4d4d4"/><rect x="992" y="126" width="4" height="2" fill="#d4d4d4"/><rect x="28" y="139" width="3" height="2" fill="#d4d4d4"/><rect x="992" y="139" width="4" height="2" fill="#d4d4d4"/><rect x="28" y="152" width="8" height="2" fill="#d4d4d4"/><rect x="987" y="152" width="9" height="2" fill="#d4d4d4"/><rect x="28" y="165" width="3" height="2" fill="#d4d4d4"/><rect x="992" y="165" width="4" height="2" fill="#d4d4d4"/><rect x="28" y="178" width="3" height="2" fill="#d4d4d4"/><rect x="992" y="178" width="4" height="2" fill="#d4d4d4"/><rect x="28" y="190" width="3" height="2" fill="#d4d4d4"/><rect x="992" y="190" width="4" height="2" fill="#d4d4d4"/><rect x="28" y="203" width="3" height="2" fill="#d4d4d4"/><rect x="992" y="203" width="4" height="2" fill="#d4d4d4"/><rect x="28" y="216" width="8" height="2" fill="#d4d4d4"/><rect x="987" y="216" width="9" height="2" fill="#d4d4d4"/><rect x="28" y="229" width="3" height="2" fill="#d4d4d4"/><rect x="992" y="229" width="4" height="2" fill="#d4d4d4"/><rect x="28" y="242" width="3" height="2" fill="#d4d4d4"/><rect x="992" y="242" width="4" height="2" fill="#d4d4d4"/><rect x="28" y="254" width="3" height="2" fill="#d4d4d4"/><rect x="992" y="254" width="4" height="2" fill="#d4d4d4"/><rect x="28" y="267" width="3" height="2" fill="#d4d4d4"/><rect x="992" y="267" width="4" height="2" fill="#d4d4d4"/><rect x="28" y="280" width="8" height="2" fill="#d4d4d4"/><rect x="987" y="280" width="9" height="2" fill="#d4d4d4"/><rect x="28" y="293" width="3" height="2" fill="#d4d4d4"/><rect x="992" y="293" width="4" height="2" fill="#d4d4d4"/><rect x="28" y="306" width="3" height="2" fill="#d4d4d4"/><rect x="992" y="306" width="4" height="2" fill="#d4d4d4"/><rect x="28" y="318" width="3" height="2" fill="#d4d4d4"/><rect x="992" y="318" width="4" height="2" fill="#d4d4d4"/><rect x="28" y="331" width="3" height="2" fill="#d4d4d4"/><rect x="992" y="331" width="4" height="2" fill="#d4d4d4"/><rect x="28" y="344" width="8" height="2" fill="#d4d4d4"/><rect x="987" y="344" width="9" height="2" fill="#d4d4d4"/><rect x="28" y="357" width="3" height="2" fill="#d4d4d4"/><rect x="992" y="357" width="4" height="2" fill="#d4d4d4"/><rect x="28" y="370" width="3" height="2" fill="#d4d4d4"/><rect x="992" y="370" width="4" height="2" fill="#d4d4d4"/><rect x="28" y="382" width="3" height="2" fill="#d4d4d4"/><rect x="992" y="382" width="4" height="2" fill="#d4d4d4"/><rect x="28" y="395" width="3" height="2" fill="#d4d4d4"/><rect x="992" y="395" width="4" height="2" fill="#d4d4d4"/><rect x="28" y="408" width="8" height="2" fill="#d4d4d4"/><rect x="987" y="408" width="9" height="2" fill="#d4d4d4"/><rect x="28" y="421" width="3" height="2" fill="#d4d4d4"/><rect x="992" y="421" width="4" height="2" fill="#d4d4d4"/><rect x="28" y="434" width="3" height="2" fill="#d4d4d4"/><rect x="992" y="434" width="4" height="2" fill="#d4d4d4"/><rect x="28" y="446" width="3" height="2" fill="#d4d4d4"/><rect x="992" y="446" width="4" height="2" fill="#d4d4d4"/><rect x="28" y="459" width="3" height="2" fill="#d4d4d4"/><rect x="992" y="459" width="4" height="2" fill="#d4d4d4"/><rect x="28" y="472" width="8" height="2" fill="#d4d4d4"/><rect x="987" y="472" width="9" height="2" fill="#d4d4d4"/><rect x="28" y="485" width="3" height="2" fill="#d4d4d4"/><rect x="992" y="485" width="4" height="2" fill="#d4d4d4"/><rect x="28" y="498" width="3" height="2" fill="#d4d4d4"/><rect x="992" y="498" width="4" height="2" fill="#d4d4d4"/><rect x="28" y="510" width="3" height="2" fill="#d4d4d4"/><rect x="992" y="510" width="4" height="2" fill="#d4d4d4"/><rect x="28" y="523" width="3" height="2" fill="#d4d4d4"/><rect x="992" y="523" width="4" height="2" fill="#d4d4d4"/><rect x="28" y="536" width="8" height="2" fill="#d4d4d4"/><rect x="987" y="536" width="9" height="2" fill="#d4d4d4"/><rect x="28" y="549" width="3" height="2" fill="#d4d4d4"/><rect x="992" y="549" width="4" height="2" fill="#d4d4d4"/><rect x="28" y="562" width="3" height="2" fill="#d4d4d4"/><rect x="992" y="562" width="4" height="2" fill="#d4d4d4"/><rect x="28" y="574" width="3" height="2" fill="#d4d4d4"/><rect x="992" y="574" width="4" height="2" fill="#d4d4d4"/><rect x="28" y="587" width="3" height="2" fill="#d4d4d4"/><rect x="992" y="587" width="4" height="2" fill="#d4d4d4"/><rect x="28" y="600" width="8" height="2" fill="#d4d4d4"/><rect x="987" y="600" width="9" height="2" fill="#d4d4d4"/><rect x="28" y="613" width="3" height="2" fill="#d4d4d4"/><rect x="992" y="613" width="4" height="2" fill="#d4d4d4"/><rect x="28" y="626" width="3" height="2" fill="#d4d4d4"/><rect x="992" y="626" width="4" height="2" fill="#d4d4d4"/><rect x="28" y="638" width="3" height="2" fill="#d4d4d4"/><rect x="992" y="638" width="4" height="2" fill="#d4d4d4"/><rect x="28" y="651" width="3" height="2" fill="#d4d4d4"/><rect x="992" y="651" width="4" height="2" fill="#d4d4d4"/></svg>
<svg class="a" style="left:0;top:0" width="1024" height="768"><polyline points="28.8,444.0 28.8,439.8 28.8,435.6 28.8,431.4 28.8,427.2 28.8,423.0 28.8,419.0 28.8,415.0 28.9,411.0 29.1,407.0 29.3,403.0 29.5,399.0 29.6,395.0 29.8,391.0 30.0,387.0 30.2,383.0 30.4,379.0 30.6,375.0 30.8,371.0 31.1,366.6 31.3,362.1 31.6,357.7 31.9,353.3 32.2,348.9 32.4,344.4 32.7,340.0 32.8,336.0 33.0,332.0 33.1,328.0 33.2,324.0 33.4,320.0 33.5,316.0 33.7,312.0 33.8,308.0 33.9,304.0 34.1,300.0 34.2,296.0 34.3,292.0 34.5,288.0 34.6,284.0 34.8,280.0 35.0,276.0 35.2,272.0 35.4,268.0 35.6,264.0 35.9,260.0 36.1,256.0 36.3,252.0 36.6,248.0 36.8,244.0 37.0,240.0 37.2,236.0 37.5,232.0 37.7,228.0 37.9,224.0 38.1,219.8 38.3,215.6 38.5,211.4 38.7,207.2 38.9,203.0 39.7,198.5 40.5,194.0 42.0,188.5 43.0,187.3 44.0,186.2 45.5,191.0 46.6,191.2 47.6,191.0 48.7,191.0 49.8,191.3 50.9,191.6 51.9,192.0 53.0,192.0 54.2,190.5 55.5,189.0 56.6,189.0 57.6,188.7 58.7,188.2 59.7,188.3 60.8,188.1 61.8,187.7 62.9,188.0 63.9,187.7 65.0,187.5 66.0,187.6 67.0,187.2 68.0,187.7 69.0,187.3 70.0,187.8 71.0,187.8 72.0,187.0 73.0,187.5 74.0,187.0 75.0,187.2 76.0,186.9 77.0,187.4 78.0,185.2 79.0,187.4 80.0,187.2 81.0,187.6 82.0,187.2 83.0,187.1 84.1,186.8 85.1,188.6 86.1,186.7 87.1,187.1 88.1,186.7 89.1,186.8 90.1,187.4 91.1,186.6 92.2,188.5 93.2,186.9 94.2,186.8 95.2,186.9 96.5,190.2 97.7,193.4 99.0,196.7 99.6,200.9 100.1,205.0 100.7,209.2 101.2,213.3 101.8,217.5 102.1,221.7 102.4,225.8 102.8,230.0 103.1,234.2 103.4,238.3 103.7,242.5 104.0,247.0 104.2,251.4 104.5,255.9 104.8,260.4 105.1,264.8 105.3,269.3 105.6,273.8 105.9,278.2 106.1,282.7 106.4,287.1 106.7,291.6 107.0,296.1 107.2,300.5 107.5,305.0 107.7,309.4 107.9,313.8 108.1,318.1 108.3,322.5 108.6,326.9 108.8,331.2 109.0,335.6 109.2,340.0 109.4,344.0 109.6,348.0 109.8,352.0 110.0,356.0 110.2,360.0 110.4,364.0 110.5,368.0 110.7,372.0 110.9,376.0 111.1,380.0 111.3,384.0 111.5,388.0 111.7,392.0 111.9,396.2 112.2,400.4 112.4,404.5 112.7,408.7 112.9,412.9 113.2,417.1 113.4,421.2 113.7,425.4 113.9,429.6 114.2,433.8 114.6,438.2 115.0,442.7 115.4,447.1 115.7,451.6 116.1,456.1 116.5,460.5 116.9,465.0 117.4,469.2 118.0,473.3 118.5,477.5 119.1,481.6 119.6,485.8 120.3,489.9 121.0,494.0 122.0,494.1 123.0,494.2 124.0,492.2 125.0,494.5 126.0,494.2 127.0,494.2 128.0,494.1 129.0,494.0 130.0,494.5 131.0,494.8 132.0,494.9 133.0,494.6 134.0,494.7 135.0,495.0 136.0,495.2 137.0,495.1 138.0,494.8 139.0,495.3 140.0,495.2 141.0,495.0 142.0,494.7 143.0,495.1 144.0,493.2 145.0,495.4 146.0,495.1 147.0,495.5 148.0,495.5 149.0,495.5 150.0,495.5 151.0,496.0 152.0,495.8 153.0,496.0 154.0,493.7 155.0,495.9 156.0,495.6 157.0,497.3 158.0,495.7 159.0,495.6 160.0,495.9 161.0,496.3 162.0,496.4 163.0,496.3 164.0,497.5 165.0,496.3 166.0,497.6 167.0,495.8 168.0,495.9 169.0,496.3 170.0,497.8 171.0,496.2 172.0,496.4 173.0,496.2 174.0,496.5 175.0,496.7 176.0,496.5 177.1,495.6 178.3,495.1 179.4,495.0 180.4,492.0 181.5,489.0 182.5,486.0 183.1,481.8 183.7,477.6 184.4,473.4 185.0,469.2 185.6,465.0 185.9,460.8 186.1,456.6 186.4,452.4 186.7,448.2 186.9,444.0 187.2,439.8 187.5,435.6 187.8,431.4 188.0,427.2 188.3,423.0 188.5,419.0 188.7,415.0 188.9,411.0 189.1,407.0 189.3,403.0 189.5,399.0 189.6,395.0 189.8,391.0 190.0,387.0 190.2,383.0 190.4,379.0 190.6,375.0 190.8,371.0 191.1,366.6 191.3,362.1 191.6,357.7 191.9,353.3 192.2,348.9 192.4,344.4 192.7,340.0 192.8,336.0 193.0,332.0 193.1,328.0 193.2,324.0 193.4,320.0 193.5,316.0 193.7,312.0 193.8,308.0 193.9,304.0 194.1,300.0 194.2,296.0 194.3,292.0 194.5,288.0 194.6,284.0 194.8,280.0 195.0,276.0 195.2,272.0 195.4,268.0 195.7,264.0 195.9,260.0 196.1,256.0 196.3,252.0 196.6,248.0 196.8,244.0 197.0,240.0 197.2,236.0 197.5,232.0 197.7,228.0 197.9,224.0 198.1,219.8 198.3,215.6 198.5,211.4 198.7,207.2 198.9,203.0 199.7,198.5 200.5,194.0 202.0,188.5 203.0,187.3 204.0,186.2 205.5,191.0 206.6,191.4 207.6,191.6 208.7,191.0 209.8,192.0 210.9,193.2 211.9,191.8 213.0,192.0 214.2,190.5 215.5,189.0 216.6,189.3 217.6,188.7 218.7,188.7 219.7,188.8 220.8,188.3 221.8,188.1 222.9,187.6 223.9,189.2 225.0,187.5 226.0,187.1 227.0,187.6 228.0,187.2 229.0,187.3 230.0,187.4 231.0,187.8 232.0,187.1 233.0,187.7 234.0,187.4 235.0,187.1 236.0,187.3 237.0,187.4 238.0,187.0 239.0,187.7 240.0,187.2 241.0,187.5 242.0,185.2 243.0,188.6 244.1,187.1 245.1,186.7 246.1,186.7 247.1,187.2 248.1,187.2 249.1,187.0 250.1,186.9 251.1,187.3 252.2,188.5 253.2,187.2 254.2,187.2 255.2,186.9 256.5,190.2 257.7,193.4 259.0,196.7 259.6,200.9 260.1,205.0 260.7,209.2 261.2,213.3 261.8,217.5 262.1,221.7 262.4,225.8 262.8,230.0 263.1,234.2 263.4,238.3 263.7,242.5 264.0,247.0 264.2,251.4 264.5,255.9 264.8,260.4 265.1,264.8 265.3,269.3 265.6,273.8 265.9,278.2 266.1,282.7 266.4,287.1 266.7,291.6 267.0,296.1 267.2,300.5 267.5,305.0 267.7,309.4 267.9,313.8 268.1,318.1 268.4,322.5 268.6,326.9 268.8,331.2 269.0,335.6 269.2,340.0 269.4,344.0 269.6,348.0 269.8,352.0 270.0,356.0 270.2,360.0 270.4,364.0 270.5,368.0 270.7,372.0 270.9,376.0 271.1,380.0 271.3,384.0 271.5,388.0 271.7,392.0 271.9,396.2 272.2,400.4 272.4,404.5 272.7,408.7 272.9,412.9 273.2,417.1 273.4,421.2 273.7,425.4 273.9,429.6 274.2,433.8 274.6,438.2 275.0,442.7 275.4,447.1 275.7,451.6 276.1,456.1 276.5,460.5 276.9,465.0 277.4,469.2 278.0,473.3 278.5,477.5 279.1,481.6 279.6,485.8 280.3,489.9 281.0,494.0 282.0,494.0 283.0,494.4 284.0,494.3 285.0,494.1 286.0,494.5 287.0,494.3 288.0,494.0 289.0,494.1 290.0,494.5 291.0,494.6 292.0,494.8 293.0,494.9 294.0,496.2 295.0,494.9 296.0,494.6 297.0,495.0 298.0,494.6 299.0,495.2 300.0,494.7 301.0,495.1 302.0,495.5 303.0,495.1 304.0,495.0 305.0,495.2 306.0,495.7 307.0,495.2 308.0,495.3 309.0,495.3 310.0,495.5 311.0,495.6 312.0,495.6 313.0,495.7 314.0,495.9 315.0,495.5 316.0,493.7 317.0,495.8 318.0,496.2 319.0,496.1 320.0,497.4 321.0,496.2 322.0,495.6 323.0,496.4 324.0,496.2 325.0,496.3 326.0,495.9 327.0,496.4 328.0,496.4 329.0,496.1 330.0,496.4 331.0,496.3 332.0,496.5 333.0,496.3 334.0,496.6 335.0,496.7 336.0,496.5 337.1,496.3 338.3,495.6 339.4,495.0 340.4,492.0 341.5,489.0 342.5,486.0 343.1,481.8 343.7,477.6 344.4,473.4 345.0,469.2 345.6,465.0 345.9,460.8 346.1,456.6 346.4,452.4 346.7,448.2 347.0,444.0 347.2,439.8 347.5,435.6 347.8,431.4 348.0,427.2 348.3,423.0 348.5,419.0 348.7,415.0 348.9,411.0 349.1,407.0 349.3,403.0 349.5,399.0 349.6,395.0 349.8,391.0 350.0,387.0 350.2,383.0 350.4,379.0 350.6,375.0 350.8,371.0 351.1,366.6 351.3,362.1 351.6,357.7 351.9,353.3 352.2,348.9 352.4,344.4 352.7,340.0 352.8,336.0 353.0,332.0 353.1,328.0 353.2,324.0 353.4,320.0 353.5,316.0 353.7,312.0 353.8,308.0 353.9,304.0 354.1,300.0 354.2,296.0 354.3,292.0 354.5,288.0 354.6,284.0 354.8,280.0 355.0,276.0 355.2,272.0 355.4,268.0 355.6,264.0 355.9,260.0 356.1,256.0 356.3,252.0 356.6,248.0 356.8,244.0 357.0,240.0 357.2,236.0 357.4,232.0 357.7,228.0 357.9,224.0 358.1,219.8 358.3,215.6 358.5,211.4 358.7,207.2 358.9,203.0 359.7,198.5 360.5,194.0 362.0,188.5 363.0,187.3 364.0,186.2 365.5,191.0 366.6,191.3 367.6,191.2 368.7,191.1 369.8,192.0 370.9,191.4 371.9,191.8 373.0,192.0 374.2,190.5 375.5,189.0 376.6,189.3 377.6,190.2 378.7,188.2 379.7,188.6 380.8,187.8 381.8,188.1 382.9,187.4 383.9,187.4 385.0,187.5 386.0,187.2 387.0,187.5 388.0,187.2 389.0,187.1 390.0,187.2 391.0,187.7 392.0,187.1 393.0,187.7 394.0,187.4 395.0,187.3 396.0,186.9 397.0,187.5 398.0,187.3 399.0,187.0 400.0,187.2 401.0,187.3 402.0,186.7 403.0,187.0 404.1,187.3 405.1,186.8 406.1,186.9 407.1,187.4 408.1,187.2 409.1,186.8 410.1,186.7 411.1,186.5 412.2,187.3 413.2,186.6 414.2,187.1 415.2,186.9 416.5,190.2 417.7,193.4 419.0,196.7 419.6,200.9 420.1,205.0 420.7,209.2 421.2,213.3 421.8,217.5 422.1,221.7 422.4,225.8 422.8,230.0 423.1,234.2 423.4,238.3 423.7,242.5 424.0,247.0 424.2,251.4 424.5,255.9 424.8,260.4 425.1,264.8 425.3,269.3 425.6,273.8 425.9,278.2 426.1,282.7 426.4,287.1 426.7,291.6 427.0,296.1 427.2,300.5 427.5,305.0 427.7,309.4 427.9,313.8 428.1,318.1 428.4,322.5 428.6,326.9 428.8,331.2 429.0,335.6 429.2,340.0 429.4,344.0 429.6,348.0 429.8,352.0 430.0,356.0 430.2,360.0 430.4,364.0 430.5,368.0 430.7,372.0 430.9,376.0 431.1,380.0 431.3,384.0 431.5,388.0 431.7,392.0 431.9,396.2 432.2,400.4 432.4,404.5 432.7,408.7 432.9,412.9 433.2,417.1 433.4,421.2 433.7,425.4 433.9,429.6 434.2,433.8 434.6,438.2 435.0,442.7 435.4,447.1 435.7,451.6 436.1,456.1 436.5,460.5 436.9,465.0 437.4,469.2 438.0,473.3 438.5,477.5 439.1,481.6 439.6,485.8 440.3,489.9 441.0,494.0 442.0,494.0 443.0,494.5 444.0,494.5 445.0,494.5 446.0,494.7 447.0,494.6 448.0,494.4 449.0,494.1 450.0,494.5 451.0,494.4 452.0,494.2 453.0,494.6 454.0,494.6 455.0,494.4 456.0,494.8 457.0,495.1 458.0,494.5 459.0,495.1 460.0,495.1 461.0,494.6 462.0,495.4 463.0,495.3 464.0,495.1 465.0,495.1 466.0,495.2 467.0,495.1 468.0,495.6 469.0,495.9 470.0,495.5 471.0,495.7 472.0,495.9 473.0,495.3 474.0,495.8 475.0,495.4 476.0,496.0 477.0,495.4 478.0,495.5 479.0,495.8 480.0,497.4 481.0,495.9 482.0,496.1 483.0,496.3 484.0,495.9 485.0,495.6 486.0,496.3 487.0,496.4 488.0,496.3 489.0,494.2 490.0,496.1 491.0,496.0 492.0,496.4 493.0,496.7 494.0,496.1 495.0,496.8 496.0,496.5 497.1,495.9 498.3,495.2 499.4,495.0 500.4,492.0 501.5,489.0 502.5,486.0 503.1,481.8 503.7,477.6 504.4,473.4 505.0,469.2 505.6,465.0 505.9,460.8 506.1,456.6 506.4,452.4 506.7,448.2 507.0,444.0 507.2,439.8 507.5,435.6 507.8,431.4 508.0,427.2 508.3,423.0 508.5,419.0 508.7,415.0 508.9,411.0 509.1,407.0 509.3,403.0 509.5,399.0 509.6,395.0 509.8,391.0 510.0,387.0 510.2,383.0 510.4,379.0 510.6,375.0 510.8,371.0 511.1,366.6 511.3,362.1 511.6,357.7 511.9,353.3 512.2,348.9 512.4,344.4 512.7,340.0 512.8,336.0 513.0,332.0 513.1,328.0 513.2,324.0 513.4,320.0 513.5,316.0 513.7,312.0 513.8,308.0 513.9,304.0 514.1,300.0 514.2,296.0 514.3,292.0 514.5,288.0 514.6,284.0 514.8,280.0 515.0,276.0 515.2,272.0 515.4,268.0 515.6,264.0 515.9,260.0 516.1,256.0 516.3,252.0 516.5,248.0 516.8,244.0 517.0,240.0 517.2,236.0 517.4,232.0 517.7,228.0 517.9,224.0 518.1,219.8 518.3,215.6 518.5,211.4 518.7,207.2 518.9,203.0 519.7,198.5 520.5,194.0 522.0,188.5 523.0,187.3 524.0,186.2 525.5,191.0 526.6,191.6 527.6,191.5 528.7,191.2 529.8,191.7 530.9,191.3 531.9,191.9 533.0,192.0 534.2,190.5 535.5,189.0 536.6,188.7 537.6,188.5 538.7,188.2 539.7,188.0 540.8,188.2 541.8,188.1 542.9,188.2 543.9,188.0 545.0,187.5 546.0,187.1 547.0,187.3 548.0,187.2 549.0,187.7 550.0,187.4 551.0,188.9 552.0,185.4 553.0,187.8 554.0,187.5 555.0,187.5 556.0,187.2 557.0,187.5 558.0,185.2 559.0,187.2 560.0,187.2 561.0,187.1 562.0,186.9 563.0,186.9 564.1,187.0 565.1,186.7 566.1,186.8 567.1,187.2 568.1,187.0 569.1,187.2 570.1,187.2 571.1,187.4 572.2,187.3 573.2,186.9 574.2,187.3 575.2,186.9 576.5,190.2 577.7,193.4 579.0,196.7 579.6,200.9 580.1,205.0 580.7,209.2 581.2,213.3 581.8,217.5 582.1,221.7 582.4,225.8 582.8,230.0 583.1,234.2 583.4,238.3 583.7,242.5 584.0,247.0 584.2,251.4 584.5,255.9 584.8,260.4 585.1,264.8 585.3,269.3 585.6,273.8 585.9,278.2 586.1,282.7 586.4,287.1 586.7,291.6 587.0,296.1 587.2,300.5 587.5,305.0 587.7,309.4 587.9,313.8 588.1,318.1 588.4,322.5 588.6,326.9 588.8,331.2 589.0,335.6 589.2,340.0 589.4,344.0 589.6,348.0 589.8,352.0 590.0,356.0 590.2,360.0 590.4,364.0 590.5,368.0 590.7,372.0 590.9,376.0 591.1,380.0 591.3,384.0 591.5,388.0 591.7,392.0 592.0,396.2 592.2,400.4 592.5,404.5 592.7,408.7 593.0,412.9 593.2,417.1 593.5,421.2 593.7,425.4 594.0,429.6 594.2,433.8 594.6,438.2 595.0,442.7 595.4,447.1 595.7,451.6 596.1,456.1 596.5,460.5 596.9,465.0 597.4,469.2 598.0,473.3 598.5,477.5 599.1,481.6 599.6,485.8 600.3,489.9 601.0,494.0 602.0,494.1 603.0,494.5 604.0,493.8 605.0,494.6 606.0,494.4 607.0,494.2 608.0,494.0 609.0,494.4 610.0,494.5 611.0,494.5 612.0,496.1 613.0,494.7 614.0,494.5 615.0,494.5 616.0,496.3 617.0,495.3 618.0,495.2 619.0,495.2 620.0,495.2 621.0,495.4 622.0,495.4 623.0,495.2 624.0,494.8 625.0,495.1 626.0,494.9 627.0,495.6 628.0,495.3 629.0,495.0 630.0,495.5 631.0,493.5 632.0,495.4 633.0,496.0 634.0,495.6 635.0,495.5 636.0,496.1 637.0,496.1 638.0,495.8 639.0,496.2 640.0,495.6 641.0,495.6 642.0,495.6 643.0,496.2 644.0,496.4 645.0,496.3 646.0,496.3 647.0,496.1 648.0,497.7 649.0,496.1 650.0,496.0 651.0,496.1 652.0,496.6 653.0,496.5 654.0,496.5 655.0,496.3 656.0,496.5 657.1,496.2 658.3,495.6 659.4,495.0 660.4,492.0 661.5,489.0 662.5,486.0 663.1,481.8 663.7,477.6 664.4,473.4 665.0,469.2 665.6,465.0 665.9,460.8 666.1,456.6 666.4,452.4 666.7,448.2 667.0,444.0 667.2,439.8 667.5,435.6 667.8,431.4 668.0,427.2 668.3,423.0 668.5,419.0 668.7,415.0 668.9,411.0 669.1,407.0 669.3,403.0 669.5,399.0 669.6,395.0 669.8,391.0 670.0,387.0 670.2,383.0 670.4,379.0 670.6,375.0 670.8,371.0 671.1,366.6 671.3,362.1 671.6,357.7 671.9,353.3 672.2,348.9 672.4,344.4 672.7,340.0 672.8,336.0 673.0,332.0 673.1,328.0 673.2,324.0 673.4,320.0 673.5,316.0 673.7,312.0 673.8,308.0 673.9,304.0 674.1,300.0 674.2,296.0 674.3,292.0 674.5,288.0 674.6,284.0 674.8,280.0 675.0,276.0 675.2,272.0 675.4,268.0 675.6,264.0 675.9,260.0 676.1,256.0 676.3,252.0 676.5,248.0 676.8,244.0 677.0,240.0 677.2,236.0 677.4,232.0 677.7,228.0 677.9,224.0 678.1,219.8 678.3,215.6 678.5,211.4 678.7,207.2 678.9,203.0 679.7,198.5 680.5,194.0 682.0,188.5 683.0,187.3 684.0,186.2 685.5,191.0 686.6,191.6 687.6,191.3 688.7,191.0 689.8,191.4 690.9,192.0 691.9,191.7 693.0,192.0 694.2,190.5 695.5,189.0 696.6,188.6 697.6,188.7 698.7,188.9 699.7,187.9 700.8,188.4 701.8,188.4 702.9,187.5 703.9,187.8 705.0,187.5 706.0,187.6 707.0,187.5 708.0,187.8 709.0,187.4 710.0,187.1 711.0,187.1 712.0,187.1 713.0,187.6 714.0,187.6 715.0,187.3 716.0,187.4 717.0,186.8 718.0,187.4 719.0,187.6 720.0,187.2 721.0,186.9 722.0,185.2 723.0,187.1 724.1,186.9 725.1,186.7 726.1,187.1 727.1,187.3 728.1,186.7 729.1,186.6 730.1,187.1 731.1,186.8 732.2,186.6 733.2,186.6 734.2,186.6 735.2,186.9 736.5,190.2 737.7,193.4 739.0,196.7 739.6,200.9 740.1,205.0 740.7,209.2 741.2,213.3 741.8,217.5 742.1,221.7 742.4,225.8 742.8,230.0 743.1,234.2 743.4,238.3 743.7,242.5 744.0,247.0 744.2,251.4 744.5,255.9 744.8,260.4 745.1,264.8 745.3,269.3 745.6,273.8 745.9,278.2 746.1,282.7 746.4,287.1 746.7,291.6 747.0,296.1 747.2,300.5 747.5,305.0 747.7,309.4 747.9,313.8 748.1,318.1 748.4,322.5 748.6,326.9 748.8,331.2 749.0,335.6 749.2,340.0 749.4,344.0 749.6,348.0 749.8,352.0 750.0,356.0 750.2,360.0 750.4,364.0 750.5,368.0 750.7,372.0 750.9,376.0 751.1,380.0 751.3,384.0 751.5,388.0 751.7,392.0 752.0,396.2 752.2,400.4 752.5,404.5 752.7,408.7 753.0,412.9 753.2,417.1 753.5,421.2 753.7,425.4 754.0,429.6 754.2,433.8 754.6,438.2 755.0,442.7 755.4,447.1 755.7,451.6 756.1,456.1 756.5,460.5 756.9,465.0 757.4,469.2 758.0,473.3 758.5,477.5 759.1,481.6 759.6,485.8 760.3,489.9 761.0,494.0 762.0,494.4 763.0,493.7 764.0,494.0 765.0,494.6 766.0,495.8 767.0,494.6 768.0,494.1 769.0,494.7 770.0,494.5 771.0,492.6 772.0,495.0 773.0,494.6 774.0,494.6 775.0,496.2 776.0,492.8 777.0,495.1 778.0,494.7 779.0,495.0 780.0,495.0 781.0,494.9 782.0,495.5 783.0,494.7 784.0,495.3 785.0,496.8 786.0,495.5 787.0,495.4 788.0,495.4 789.0,495.8 790.0,495.5 791.0,495.8 792.0,495.4 793.0,495.7 794.0,495.4 795.0,495.7 796.0,495.7 797.0,495.9 798.0,495.5 799.0,495.5 800.0,495.8 801.0,495.5 802.0,495.7 803.0,496.4 804.0,495.8 805.0,495.8 806.0,496.0 807.0,496.4 808.0,495.8 809.0,496.1 810.0,496.6 811.0,496.6 812.0,495.9 813.0,496.1 814.0,497.9 815.0,496.5 816.0,496.5 817.1,494.0 818.3,495.4 819.4,495.0 820.4,492.0 821.5,489.0 822.5,486.0 823.1,481.8 823.7,477.6 824.4,473.4 825.0,469.2 825.6,465.0 825.9,460.8 826.1,456.6 826.4,452.4 826.7,448.2 827.0,444.0 827.2,439.8 827.5,435.6 827.8,431.4 828.0,427.2 828.3,423.0 828.5,419.0 828.7,415.0 828.9,411.0 829.1,407.0 829.3,403.0 829.5,399.0 829.6,395.0 829.8,391.0 830.0,387.0 830.2,383.0 830.4,379.0 830.6,375.0 830.8,371.0 831.1,366.6 831.3,362.1 831.6,357.7 831.9,353.3 832.2,348.9 832.4,344.4 832.7,340.0 832.8,336.0 833.0,332.0 833.1,328.0 833.2,324.0 833.4,320.0 833.5,316.0 833.7,312.0 833.8,308.0 833.9,304.0 834.1,300.0 834.2,296.0 834.3,292.0 834.5,288.0 834.6,284.0 834.8,280.0 835.0,276.0 835.2,272.0 835.4,268.0 835.6,264.0 835.9,260.0 836.1,256.0 836.3,252.0 836.5,248.0 836.8,244.0 837.0,240.0 837.2,236.0 837.4,232.0 837.7,228.0 837.9,224.0 838.1,219.8 838.3,215.6 838.5,211.4 838.7,207.2 838.9,203.0 839.7,198.5 840.5,194.0 842.0,188.5 843.0,187.3 844.0,186.2 845.5,191.0 846.6,190.8 847.6,191.1 848.7,191.6 849.8,191.3 850.9,191.9 851.9,191.8 853.0,192.0 854.2,190.5 855.5,189.0 856.6,188.6 857.6,188.5 858.7,188.1 859.7,186.3 860.8,188.2 861.8,188.4 862.9,188.0 863.9,187.4 865.0,187.5 866.0,187.6 867.0,187.8 868.0,187.6 869.0,187.4 870.0,187.0 871.0,187.2 872.0,187.2 873.0,187.3 874.0,187.0 875.0,187.1 876.0,187.1 877.0,186.9 878.0,187.4 879.0,187.4 880.0,187.2 881.0,185.2 882.0,187.0 883.0,188.6 884.1,186.7 885.1,187.2 886.1,186.9 887.1,186.6 888.1,187.4 889.1,186.8 890.1,186.7 891.1,187.1 892.2,186.8 893.2,187.3 894.2,187.0 895.2,186.9 896.5,190.2 897.7,193.4 899.0,196.7 899.6,200.9 900.1,205.0 900.7,209.2 901.2,213.3 901.8,217.5 902.1,221.7 902.4,225.8 902.8,230.0 903.1,234.2 903.4,238.3 903.7,242.5 904.0,247.0 904.2,251.4 904.5,255.9 904.8,260.4 905.1,264.8 905.3,269.3 905.6,273.8 905.9,278.2 906.1,282.7 906.4,287.1 906.7,291.6 907.0,296.1 907.2,300.5 907.5,305.0 907.7,309.4 907.9,313.8 908.1,318.1 908.4,322.5 908.6,326.9 908.8,331.2 909.0,335.6 909.2,340.0 909.4,344.0 909.6,348.0 909.8,352.0 910.0,356.0 910.2,360.0 910.4,364.0 910.5,368.0 910.7,372.0 910.9,376.0 911.1,380.0 911.3,384.0 911.5,388.0 911.7,392.0 912.0,396.2 912.2,400.4 912.5,404.5 912.7,408.7 913.0,412.9 913.2,417.1 913.5,421.2 913.7,425.4 914.0,429.6 914.2,433.8 914.6,438.2 915.0,442.7 915.4,447.1 915.7,451.6 916.1,456.1 916.5,460.5 916.9,465.0 917.4,469.2 918.0,473.3 918.5,477.5 919.1,481.6 919.6,485.8 920.3,489.9 921.0,494.0 922.0,494.0 923.0,493.9 924.0,494.5 925.0,494.6 926.0,492.3 927.0,494.3 928.0,494.3 929.0,494.1 930.0,494.5 931.0,494.3 932.0,494.4 933.0,492.6 934.0,494.6 935.0,494.7 936.0,494.8 937.0,494.9 938.0,495.3 939.0,494.8 940.0,494.8 941.0,495.2 942.0,495.5 943.0,494.8 944.0,495.2 945.0,495.1 946.0,495.5 947.0,495.1 948.0,495.2 949.0,495.5 950.0,495.5 951.0,495.1 952.0,497.1 953.0,495.8 954.0,495.6 955.0,495.7 956.0,496.1 957.0,495.4 958.0,495.8 959.0,495.7 960.0,495.7 961.0,495.8 962.0,496.2 963.0,496.3 964.0,496.0 965.0,496.2 966.0,496.4 967.0,496.0 968.0,496.0 969.0,495.8 970.0,496.7 971.0,496.0 972.0,496.3 973.0,496.3 974.0,496.9 975.0,498.0 976.0,496.5 977.1,495.7 978.3,497.0 979.4,495.0 980.4,492.0 981.5,489.0 982.5,486.0 983.1,481.8 983.7,477.6 984.4,473.4 985.0,469.2 985.6,465.0 985.9,460.8 986.1,456.6 986.4,452.4 986.7,448.2 987.0,444.0 987.2,439.8 987.5,435.6 987.8,431.4 988.0,427.2 988.3,423.0 988.5,419.0 988.7,415.0 988.9,411.0 989.1,407.0 989.3,403.0 989.5,399.0 989.6,395.0 989.8,391.0 990.0,387.0 990.2,383.0 990.4,379.0 990.6,375.0 990.8,371.0 991.1,366.6 991.3,362.1 991.6,357.7 991.9,353.3 992.2,348.9 992.4,344.4 992.7,340.0 992.8,336.0 993.0,332.0 993.1,328.0 993.2,324.0 993.4,320.0 993.5,316.0 993.7,312.0 993.8,308.0 993.9,304.0 994.1,300.0 994.2,296.0 994.3,292.0 994.5,288.0 994.6,284.0 994.8,280.0 994.8,276.0 994.8,272.0 994.8,268.0 994.8,264.0 994.8,260.0 994.8,256.0 994.8,252.0 994.8,248.0 994.8,244.0 994.8,240.0 994.8,236.0 994.8,232.0 994.8,228.0 994.8,224.0 994.8,219.8 994.8,215.6" fill="none" stroke="#e01010" stroke-width="1.6" stroke-linejoin="round"/></svg>

<!-- T marker under top border -->
<svg class="a" style="left:502px;top:24px" width="22" height="22" viewBox="0 0 22 22">
  <path d="M3,2 H19 V15 L11,19.5 L3,15 Z" fill="#000" stroke="#9020d0" stroke-width="2"/>
  <path d="M6.5,6 H15.5 M11,6 V14.5" fill="none" stroke="#9020d0" stroke-width="2.4"/>
</svg>

<!-- channel 1 marker -->
<svg class="a" style="left:0;top:333px" width="26" height="25" viewBox="0 0 26 25">
  <path d="M0,1.5 H17.5 L23.5,12 L17.5,23 H0" fill="#000" stroke="#d01010" stroke-width="2.2"/>
  <path d="M7.5,6 L10.5,4 V19" fill="none" stroke="#e01010" stroke-width="2.2"/>
</svg>

<!-- trigger level marker -->
<svg class="a" style="left:998px;top:282px" width="20" height="18" viewBox="0 0 20 18">
  <path d="M1.5,9.5 L17.5,2 V16.5 Z" fill="#a020e0"/>
</svg>

<!-- bottom panel left -->
<div class="a" style="left:0;top:664px;width:408px;height:104px;background:#0080e0"></div>
<div class="a" style="left:267px;top:664px;width:3px;height:52px;background:#60a8a8"></div>
<div class="a" style="left:0;top:715px;width:406px;height:3px;background:#60a8a8"></div>
<div class="a" style="left:0;top:765px;width:408px;height:3px;background:#60a0a0"></div>
<div class="a" style="left:0;top:664px;width:1px;height:104px;background:#60a0a0"></div>
<div class="a" style="left:406px;top:664px;width:2px;height:104px;background:#60a0a0"></div>

<div class="pill" style="left:1px;top:664px;width:266px;height:26px;border-radius:7px"></div>
<div class="a" style="left:6px;top:690px;width:256px;height:1px;background:#183868"></div>
<div class="pill" style="left:1px;top:691px;width:266px;height:24px;border-radius:7px"></div>
<div class="pill" style="left:270px;top:664px;width:135px;height:51px;border-radius:10px"></div>
<div class="pill" style="left:1px;top:718px;width:404px;height:23px;border-radius:6px"></div>

<svg class="a" style="left:3px;top:668.7px" width="20.3" height="20.3" viewBox="0 0 20.3 20.3"><circle cx="10.15" cy="10.15" r="10.15" fill="#f00000"/><path d="M7.0,6.0 L10.8,3.0 V17.6" fill="none" stroke="#180000" stroke-width="2.3"/></svg>
<div class="t" style="left:22px;top:669px;color:#d82020">2V</div>
<div class="a" style="left:49px;top:679px;width:9px;height:2px;background:#b81818"></div>
<div class="t" style="left:134px;top:669px;color:#d82020">0.00div</div>
<div class="circ" style="left:3px;top:694px;width:20px;height:20px;background:#e8e020;font-size:17px;line-height:21px">2</div>
<div class="t" style="left:22px;top:694px;color:#d8d840">50.0mV~</div>
<div class="t" style="left:134px;top:694px;color:#d8d840">0.00div</div>
<svg class="a" style="left:2px;top:718.5px" width="20.5" height="20.5" viewBox="0 0 20.5 20.5"><circle cx="10.25" cy="10.25" r="10.25" fill="#f00000"/><path d="M7.0,6.0 L10.8,3.0 V17.8" fill="none" stroke="#180000" stroke-width="2.3"/></svg>
<div class="t" style="left:27px;top:720px;color:#d82020;letter-spacing:1px">F:2.000MHz</div>

<div class="t" style="left:279px;top:669px;color:#e0e0e0">(500MS/s)</div>
<div class="t" style="left:278px;top:693px;color:#e0e0e0">Depth:10K</div>

<!-- right bottom area -->
<div class="a" style="left:408px;top:664px;width:616px;height:104px;background:#0080e0"></div>
<div class="a" style="left:409px;top:688px;width:613px;height:78px;background:#0060a4"></div>
<div class="pill" style="left:409px;top:664px;width:126px;height:24px;border-radius:12px"></div>
<div class="t" style="left:426px;top:667px;color:#e0e0e0">M:200ns</div>

<!-- Type button -->
<div class="a" style="left:413px;top:692px;width:114px;height:71px;background:#0080e0;border-top:2px solid #48a0f0;border-left:2px solid #3898e8;border-right:2px solid #0050a0;border-bottom:2px solid #0050a0;box-sizing:border-box;border-radius:3px"></div>
<div class="t" style="left:441px;top:703px;color:#001040;-webkit-text-stroke:0.3px #001040">Type</div>
<div class="a" style="left:436px;top:731px;width:64px;height:25px;background:#e0e0e0"></div>
<div class="t" style="left:436px;top:733px;color:#000;-webkit-text-stroke:0.2px #000">Image</div>

<!-- Save button -->
<div class="a" style="left:765px;top:692px;width:114px;height:71px;background:#0080e0;border-top:2px solid #48a0f0;border-left:2px solid #3898e8;border-right:2px solid #0050a0;border-bottom:2px solid #0050a0;box-sizing:border-box;border-radius:3px"></div>
<div class="a" style="left:795px;top:716px;white-space:pre;font-family:'Liberation Sans',sans-serif;font-size:18px;line-height:24px;letter-spacing:3px;color:#001858;-webkit-text-stroke:0.3px #001858">Save</div>

<!-- trigger pill -->
<div class="pill" style="left:851px;top:664px;width:165px;height:24px;border-radius:12px"></div>
<svg class="a" style="left:854px;top:666px" width="20.8" height="20.8" viewBox="0 0 20.8 20.8"><circle cx="10.4" cy="10.4" r="10.4" fill="#f00000"/><path d="M7.2,6.2 L11.0,3.2 V17.9" fill="none" stroke="#180000" stroke-width="2.3"/></svg>
<svg class="a" style="left:874px;top:666px" width="32" height="22" viewBox="0 0 32 22">
  <path d="M2,19 H12.5 L18.5,3.5 H28" fill="none" stroke="#c8c8c8" stroke-width="1.7"/>
</svg>
<div class="t" style="left:905px;top:668px;color:#e0e0e0">1.68V</div>

</body></html>
